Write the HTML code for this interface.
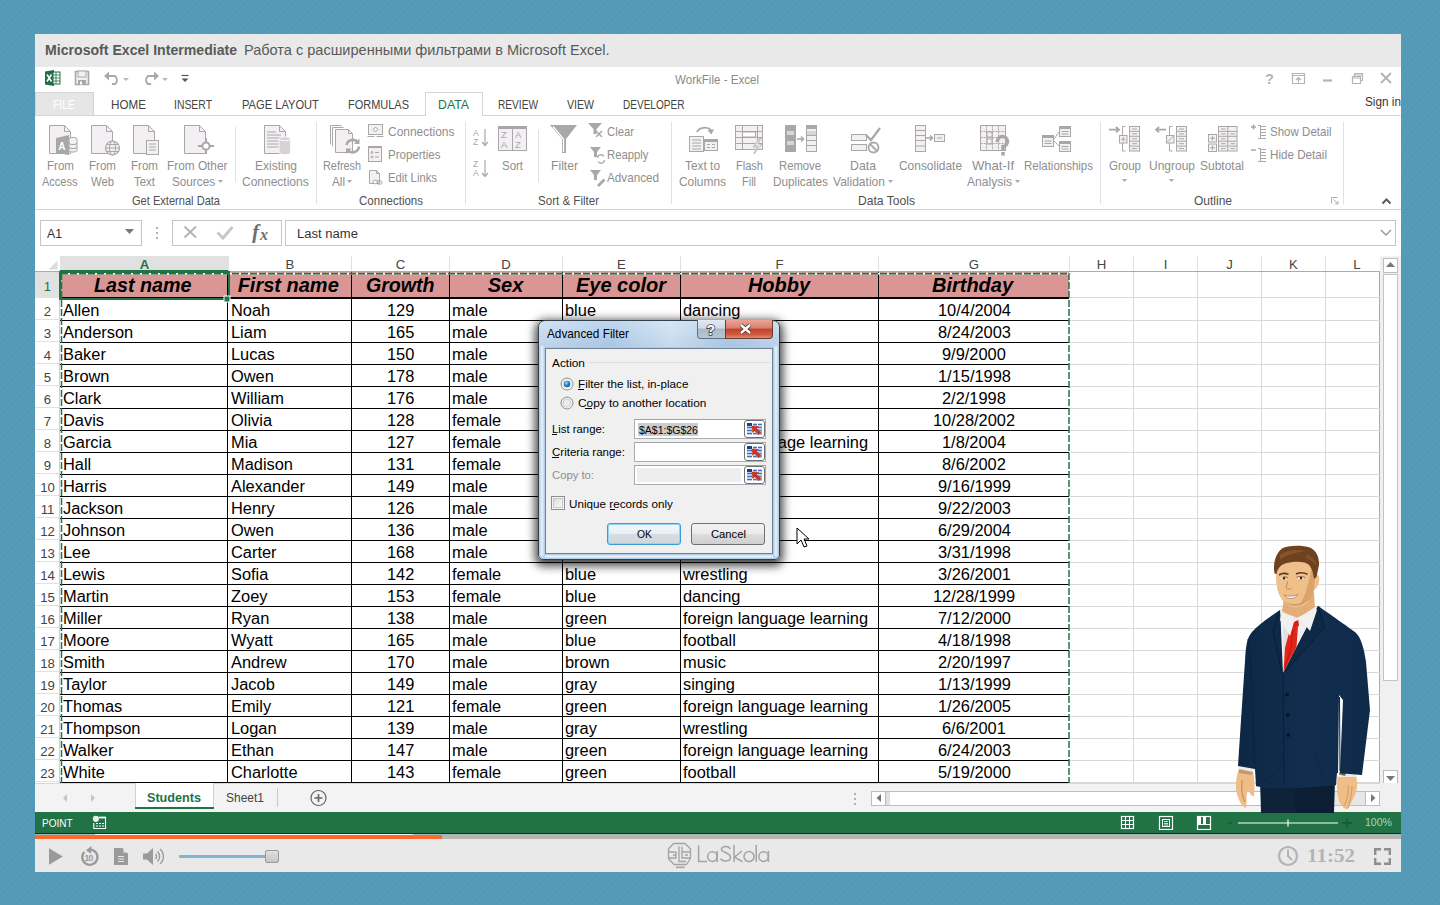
<!DOCTYPE html><html><head><meta charset="utf-8"><style>
*{box-sizing:border-box;margin:0;padding:0}
html,body{width:1440px;height:905px;overflow:hidden}
body{position:relative;font-family:"Liberation Sans",sans-serif;background:#5499b6}
.a{position:absolute;display:block}
.t{position:absolute;white-space:nowrap;line-height:1}
</style></head><body>
<svg class="a" style="left:0px;top:0px;" width="1440" height="905" viewBox="0 0 1440 905"><defs><pattern id="bp" width="6" height="6" patternUnits="userSpaceOnUse"><rect width="6" height="6" fill="#569bb7"/><circle cx="0.5" cy="1.5" r="1.1" fill="#4b8eaf" opacity=".5"/><circle cx="6.5" cy="1.5" r="1.1" fill="#4b8eaf" opacity=".5"/><circle cx="4.5" cy="3.5" r="1.1" fill="#4b8eaf" opacity=".5"/><circle cx="2.5" cy="5.5" r="1.1" fill="#4b8eaf" opacity=".5"/></pattern></defs><rect width="1440" height="905" fill="url(#bp)"/></svg>
<div class="a" style="left:35px;top:34px;width:1366px;height:838px;background:#fff"></div>
<div class="a" style="left:35px;top:34px;width:1366px;height:33px;background:#e9e9e9"></div>
<div class="t" style="left:45px;top:42.7px;font-size:14.5px;color:#595959;font-weight:bold;font-style:normal;transform:scaleX(0.973);transform-origin:0 0;">Microsoft Excel Intermediate</div>
<div class="t" style="left:243.5px;top:42.5px;font-size:14.8px;color:#595959;font-weight:normal;font-style:normal;transform:scaleX(0.982);transform-origin:0 0;">Работа с расширенными фильтрами в Microsoft Excel.</div>
<div class="t" style="left:675px;top:74.4px;font-size:12.5px;color:#8a8a8a;font-weight:normal;font-style:normal;transform:scaleX(0.926);transform-origin:0 0;">WorkFile - Excel</div>
<div class="t" style="left:1365px;top:96.4px;font-size:12.5px;color:#333;font-weight:normal;font-style:normal;transform:scaleX(0.942);transform-origin:0 0;">Sign in</div>
<div class="a" style="left:35px;top:92px;width:59px;height:24px;background:#e6e6e6;border:1px solid #d2d2d2;border-bottom:none"></div>
<div class="a" style="left:35px;top:115px;width:1366px;height:1px;background:#d4d4d4"></div>
<div class="a" style="left:425px;top:92px;width:58px;height:24px;background:#fff;border:1px solid #d4d4d4;border-bottom:none"></div>
<div class="t" style="left:53px;top:99.3px;font-size:12.6px;color:#fff;font-weight:normal;font-style:normal;transform:scaleX(0.827);transform-origin:0 0;">FILE</div>
<div class="t" style="left:111px;top:99.3px;font-size:12.6px;color:#444;font-weight:normal;font-style:normal;transform:scaleX(0.926);transform-origin:0 0;">HOME</div>
<div class="t" style="left:174px;top:99.3px;font-size:12.6px;color:#444;font-weight:normal;font-style:normal;transform:scaleX(0.827);transform-origin:0 0;">INSERT</div>
<div class="t" style="left:242px;top:99.3px;font-size:12.6px;color:#444;font-weight:normal;font-style:normal;transform:scaleX(0.884);transform-origin:0 0;">PAGE LAYOUT</div>
<div class="t" style="left:348px;top:99.3px;font-size:12.6px;color:#444;font-weight:normal;font-style:normal;transform:scaleX(0.871);transform-origin:0 0;">FORMULAS</div>
<div class="t" style="left:438px;top:99.3px;font-size:12.6px;color:#217346;font-weight:normal;font-style:normal;transform:scaleX(0.977);transform-origin:0 0;">DATA</div>
<div class="t" style="left:498px;top:99.3px;font-size:12.6px;color:#444;font-weight:normal;font-style:normal;transform:scaleX(0.805);transform-origin:0 0;">REVIEW</div>
<div class="t" style="left:567px;top:99.3px;font-size:12.6px;color:#444;font-weight:normal;font-style:normal;transform:scaleX(0.838);transform-origin:0 0;">VIEW</div>
<div class="t" style="left:623px;top:99.3px;font-size:12.6px;color:#444;font-weight:normal;font-style:normal;transform:scaleX(0.798);transform-origin:0 0;">DEVELOPER</div>
<div class="a" style="left:35px;top:209px;width:1366px;height:1px;background:#d4d4d4"></div>
<div class="a" style="left:316px;top:122px;width:1px;height:82px;background:#e1e1e1"></div>
<div class="a" style="left:465px;top:122px;width:1px;height:82px;background:#e1e1e1"></div>
<div class="a" style="left:671px;top:122px;width:1px;height:82px;background:#e1e1e1"></div>
<div class="a" style="left:1100px;top:122px;width:1px;height:82px;background:#e1e1e1"></div>
<div class="a" style="left:1343px;top:122px;width:1px;height:82px;background:#e1e1e1"></div>
<div class="a" style="left:235px;top:127px;width:1px;height:55px;background:#e1e1e1"></div>
<div class="a" style="left:538px;top:130px;width:1px;height:52px;background:#e1e1e1"></div>
<svg class="a" style="left:45px;top:122px;" width="36" height="36" viewBox="0 0 36 36"><path d="M4.5 3.5H19.5L25.5 9.5V31.5H4.5Z" fill="#f3eff3" stroke="#a8a8a8"/><path d="M19.5 3.5V9.5H25.5" fill="none" stroke="#a8a8a8"/><path d="M11 16L24 13V33L11 31Z" fill="#a8a8a8"/><text x="13.2" y="28" font-size="10" font-weight="bold" fill="#fff" font-family="Liberation Sans">A</text><ellipse cx="28" cy="17" rx="4" ry="1.6" fill="#f3eff3" stroke="#a8a8a8"/><path d="M24 17V28.5A4 1.6 0 0 0 32 28.5V17" fill="#f3eff3" stroke="#a8a8a8"/><path d="M24 21A4 1.6 0 0 0 32 21M24 25A4 1.6 0 0 0 32 25" fill="none" stroke="#a8a8a8"/></svg>
<div class="t" style="left:46.5px;top:158.9px;font-size:13px;color:#8e8e8e;font-weight:normal;font-style:normal;transform:scaleX(0.890);transform-origin:0 0;">From</div>
<div class="t" style="left:42.25px;top:174.9px;font-size:13px;color:#8e8e8e;font-weight:normal;font-style:normal;transform:scaleX(0.847);transform-origin:0 0;">Access</div>
<svg class="a" style="left:87px;top:122px;" width="36" height="36" viewBox="0 0 36 36"><path d="M4.5 3.5H19.5L25.5 9.5V31.5H4.5Z" fill="#f3eff3" stroke="#a8a8a8"/><path d="M19.5 3.5V9.5H25.5" fill="none" stroke="#a8a8a8"/><circle cx="25.5" cy="26" r="7" fill="#f3eff3" stroke="#a8a8a8" stroke-width="1.2"/><ellipse cx="25.5" cy="26" rx="3" ry="7" fill="none" stroke="#a8a8a8"/><path d="M18.5 26H32.5M19.5 22.5H31.5M19.5 29.5H31.5" stroke="#a8a8a8"/></svg>
<div class="t" style="left:88.5px;top:158.9px;font-size:13px;color:#8e8e8e;font-weight:normal;font-style:normal;transform:scaleX(0.890);transform-origin:0 0;">From</div>
<div class="t" style="left:90.5px;top:174.9px;font-size:13px;color:#8e8e8e;font-weight:normal;font-style:normal;transform:scaleX(0.868);transform-origin:0 0;">Web</div>
<svg class="a" style="left:129px;top:122px;" width="36" height="36" viewBox="0 0 36 36"><path d="M4.5 3.5H19.5L25.5 9.5V31.5H4.5Z" fill="#f3eff3" stroke="#a8a8a8"/><path d="M19.5 3.5V9.5H25.5" fill="none" stroke="#a8a8a8"/><rect x="17.5" y="18.5" width="12" height="14" fill="#f3eff3" stroke="#a8a8a8"/><path d="M20 22H27M20 25H27M20 28H27" stroke="#a8a8a8"/></svg>
<div class="t" style="left:130.5px;top:158.9px;font-size:13px;color:#8e8e8e;font-weight:normal;font-style:normal;transform:scaleX(0.890);transform-origin:0 0;">From</div>
<div class="t" style="left:133.5px;top:174.9px;font-size:13px;color:#8e8e8e;font-weight:normal;font-style:normal;transform:scaleX(0.881);transform-origin:0 0;">Text</div>
<svg class="a" style="left:180px;top:122px;" width="36" height="36" viewBox="0 0 36 36"><path d="M4.5 3.5H19.5L25.5 9.5V31.5H4.5Z" fill="#f3eff3" stroke="#a8a8a8"/><path d="M19.5 3.5V9.5H25.5" fill="none" stroke="#a8a8a8"/><circle cx="26" cy="24" r="3.6" fill="#fff" stroke="#a8a8a8" stroke-width="2"/><path d="M18 24H22.4M29.6 24H34M26 16V20.4M26 27.6V32" stroke="#a8a8a8" stroke-width="2"/></svg>
<div class="t" style="left:167.25px;top:158.9px;font-size:13px;color:#8e8e8e;font-weight:normal;font-style:normal;transform:scaleX(0.910);transform-origin:0 0;">From Other</div>
<div class="t" style="left:172.0px;top:174.9px;font-size:13px;color:#8e8e8e;font-weight:normal;font-style:normal;transform:scaleX(0.902);transform-origin:0 0;">Sources</div>
<svg class="a" style="left:218.0px;top:179.9px;" width="6" height="4" viewBox="0 0 6 4"><path d="M0 0H5L2.5 3Z" fill="#a8a8a8"/></svg>
<svg class="a" style="left:259px;top:122px;" width="36" height="36" viewBox="0 0 36 36"><path d="M5.5 3.5H20.5L26.5 9.5V31.5H5.5Z" fill="#f3eff3" stroke="#a8a8a8"/><path d="M20.5 3.5V9.5H26.5" fill="none" stroke="#a8a8a8"/><path d="M8 10H17M8 13H22M8 16H22M8 19H22M8 22H22M8 25H22" stroke="#a8a8a8"/><path d="M20 17A5.8 2.2 0 0 1 31.6 17V30.5A5.8 2.2 0 0 1 20 30.5Z" fill="#d6d2d6" stroke="#fff" stroke-width=".8"/><path d="M20.5 17.5A5.5 1.8 0 0 0 31 17.5" fill="none" stroke="#fff" stroke-width=".9"/></svg>
<div class="t" style="left:254.7px;top:158.9px;font-size:13px;color:#8e8e8e;font-weight:normal;font-style:normal;transform:scaleX(0.923);transform-origin:0 0;">Existing</div>
<div class="t" style="left:242.39999999999998px;top:174.9px;font-size:13px;color:#8e8e8e;font-weight:normal;font-style:normal;transform:scaleX(0.922);transform-origin:0 0;">Connections</div>
<div class="t" style="left:132.0px;top:194.0px;font-size:13px;color:#505050;font-weight:normal;font-style:normal;transform:scaleX(0.852);transform-origin:0 0;">Get External Data</div>
<svg class="a" style="left:327px;top:122px;" width="36" height="36" viewBox="0 0 36 36"><path d="M3.5 3.5H14.5M3.5 3.5V22.5" fill="none" stroke="#a8a8a8"/><path d="M5.5 5.5H16.5M5.5 5.5V24.5" fill="none" stroke="#a8a8a8"/><path d="M8.5 7.5H21.5L25.5 11.5V30.5H8.5Z" fill="#f3eff3" stroke="#a8a8a8"/><path d="M21.5 7.5V11.5H25.5" fill="none" stroke="#a8a8a8"/><path d="M19.5 23A6.5 6.5 0 0 1 31 20.5M32 24.5A6.5 6.5 0 0 1 20.5 28" fill="none" stroke="#a8a8a8" stroke-width="2.6"/><path d="M32.5 16.5V22H27Z M19 32V26.5H24.5Z" fill="#a8a8a8"/></svg>
<div class="t" style="left:323.0px;top:158.9px;font-size:13px;color:#8e8e8e;font-weight:normal;font-style:normal;transform:scaleX(0.835);transform-origin:0 0;">Refresh</div>
<div class="t" style="left:331.5px;top:174.9px;font-size:13px;color:#8e8e8e;font-weight:normal;font-style:normal;transform:scaleX(0.900);transform-origin:0 0;">All</div>
<svg class="a" style="left:347px;top:179.9px;" width="6" height="4" viewBox="0 0 6 4"><path d="M0 0H5L2.5 3Z" fill="#a8a8a8"/></svg>
<svg class="a" style="left:366px;top:122px;" width="20" height="18" viewBox="0 0 20 18"><rect x="2.5" y="2.5" width="14" height="10" fill="#f3eff3" stroke="#a8a8a8"/><path d="M1.5 14.5H8.5M10.5 14.5H17.5" stroke="#a8a8a8"/><path d="M9.5 5L12 7.5L9.5 10L7 7.5Z" fill="none" stroke="#a8a8a8"/></svg>
<div class="t" style="left:387.5px;top:125.0px;font-size:13px;color:#8e8e8e;font-weight:normal;font-style:normal;transform:scaleX(0.920);transform-origin:0 0;">Connections</div>
<svg class="a" style="left:366px;top:145px;" width="20" height="18" viewBox="0 0 20 18"><rect x="2.5" y="1.5" width="13" height="15" fill="#f3eff3" stroke="#a8a8a8"/><rect x="2" y="1" width="14" height="2" fill="#a8a8a8"/><circle cx="6" cy="7.5" r="1" fill="none" stroke="#a8a8a8"/><circle cx="6" cy="12" r="1" fill="none" stroke="#a8a8a8"/><path d="M9 7.5H13M9 12H13" stroke="#a8a8a8"/></svg>
<div class="t" style="left:387.5px;top:148.0px;font-size:13px;color:#8e8e8e;font-weight:normal;font-style:normal;transform:scaleX(0.886);transform-origin:0 0;">Properties</div>
<svg class="a" style="left:366px;top:168px;" width="20" height="18" viewBox="0 0 20 18"><path d="M3.5 2.5H10.5L13.5 5.5V15.5H3.5Z" fill="#f3eff3" stroke="#a8a8a8"/><path d="M10.5 2.5V5.5H13.5" fill="none" stroke="#a8a8a8"/><ellipse cx="9.5" cy="14" rx="2.6" ry="1.8" fill="#fff" stroke="#a8a8a8"/><ellipse cx="13.5" cy="14.5" rx="2.6" ry="1.8" fill="none" stroke="#a8a8a8"/></svg>
<div class="t" style="left:387.5px;top:171.0px;font-size:13px;color:#8e8e8e;font-weight:normal;font-style:normal;transform:scaleX(0.869);transform-origin:0 0;">Edit Links</div>
<div class="t" style="left:359.0px;top:194.0px;font-size:13px;color:#505050;font-weight:normal;font-style:normal;transform:scaleX(0.886);transform-origin:0 0;">Connections</div>
<svg class="a" style="left:472px;top:126px;" width="18" height="26" viewBox="0 0 18 26"><text x="1" y="9.5" font-size="8.5" fill="#a8a8a8" font-family="Liberation Sans">A</text><text x="1" y="18.5" font-size="8.5" fill="#a8a8a8" font-family="Liberation Sans">Z</text><path d="M13 3V19M10 16L13 19.5L16 16" fill="none" stroke="#a8a8a8" stroke-width="1.2"/></svg>
<svg class="a" style="left:472px;top:157px;" width="18" height="26" viewBox="0 0 18 26"><text x="1" y="9.5" font-size="8.5" fill="#a8a8a8" font-family="Liberation Sans">Z</text><text x="1" y="18.5" font-size="8.5" fill="#a8a8a8" font-family="Liberation Sans">A</text><path d="M13 3V19M10 16L13 19.5L16 16" fill="none" stroke="#a8a8a8" stroke-width="1.2"/></svg>
<svg class="a" style="left:496px;top:124px;" width="34" height="30" viewBox="0 0 34 30"><rect x="2.5" y="2.5" width="28" height="24" fill="#f3eff3" stroke="#a8a8a8"/><rect x="2" y="2" width="29" height="3" fill="#a8a8a8"/><path d="M16.5 5V26.5" stroke="#a8a8a8"/><g font-family="Liberation Sans" font-size="9.5" fill="#a8a8a8"><text x="5" y="14">Z</text><text x="5" y="24">A</text><text x="19" y="14">A</text><text x="19" y="24">Z</text></g></svg>
<div class="t" style="left:501.5px;top:158.9px;font-size:13px;color:#8e8e8e;font-weight:normal;font-style:normal;transform:scaleX(0.881);transform-origin:0 0;">Sort</div>
<svg class="a" style="left:548px;top:123px;" width="32" height="32" viewBox="0 0 32 32"><path d="M2 2H29L18 16V30H14V16Z" fill="#a8a8a8"/><path d="M5 3.5L15.5 16V29" fill="none" stroke="#fff" stroke-width="1.3"/></svg>
<div class="t" style="left:550.5px;top:158.9px;font-size:13px;color:#8e8e8e;font-weight:normal;font-style:normal;transform:scaleX(0.935);transform-origin:0 0;">Filter</div>
<svg class="a" style="left:587px;top:122px;" width="20" height="18" viewBox="0 0 20 18"><path d="M1 1H15L9.5 7V12H6.5V7Z" fill="#a8a8a8"/><path d="M9 9L15 15M15 9L9 15" stroke="#a8a8a8" stroke-width="1.5"/></svg>
<div class="t" style="left:607px;top:125.0px;font-size:13px;color:#8e8e8e;font-weight:normal;font-style:normal;transform:scaleX(0.869);transform-origin:0 0;">Clear</div>
<svg class="a" style="left:589px;top:146px;" width="20" height="18" viewBox="0 0 20 18"><path d="M1 1H12L8 6V11H5V6Z" fill="#a8a8a8"/><path d="M8.5 12A3.5 3.5 0 0 1 15 10.5M15.5 14A3.5 3.5 0 0 1 9 15.5" fill="none" stroke="#a8a8a8" stroke-width="1.3"/></svg>
<div class="t" style="left:607px;top:148.0px;font-size:13px;color:#8e8e8e;font-weight:normal;font-style:normal;transform:scaleX(0.870);transform-origin:0 0;">Reapply</div>
<svg class="a" style="left:589px;top:169px;" width="20" height="18" viewBox="0 0 20 18"><path d="M1 1H12L8 6V11H5V6Z" fill="#a8a8a8"/><path d="M8 16L14.5 9.5L16.5 11.5L10 18Z" fill="#a8a8a8"/></svg>
<div class="t" style="left:607px;top:171.0px;font-size:13px;color:#8e8e8e;font-weight:normal;font-style:normal;transform:scaleX(0.899);transform-origin:0 0;">Advanced</div>
<div class="t" style="left:537.5px;top:194.0px;font-size:13px;color:#505050;font-weight:normal;font-style:normal;transform:scaleX(0.889);transform-origin:0 0;">Sort &amp; Filter</div>
<svg class="a" style="left:686px;top:122px;" width="34" height="34" viewBox="0 0 34 34"><rect x="3.5" y="14.5" width="14" height="15" fill="#f3eff3" stroke="#a8a8a8"/><path d="M6 18H15M6 21H15M6 24H15M6 27H15" stroke="#a8a8a8"/><rect x="18.5" y="17.5" width="13" height="11" fill="#f3eff3" stroke="#a8a8a8"/><rect x="18" y="17" width="14" height="3" fill="#a8a8a8"/><path d="M21 22.5H24M26 22.5H29M21 25.5H24M26 25.5H29" stroke="#a8a8a8"/><path d="M11 10A8 6 0 0 1 25 8" fill="none" stroke="#a8a8a8" stroke-width="1.8"/><path d="M21.5 8.5L25.5 12.5L28 7Z" fill="#a8a8a8"/></svg>
<div class="t" style="left:684.5px;top:158.9px;font-size:13px;color:#8e8e8e;font-weight:normal;font-style:normal;transform:scaleX(0.914);transform-origin:0 0;">Text to</div>
<div class="t" style="left:678.5px;top:174.9px;font-size:13px;color:#8e8e8e;font-weight:normal;font-style:normal;transform:scaleX(0.916);transform-origin:0 0;">Columns</div>
<svg class="a" style="left:734px;top:122px;" width="32" height="36" viewBox="0 0 32 36"><rect x="1.5" y="3.5" width="27" height="24" fill="#f3eff3" stroke="#a8a8a8"/><path d="M1.5 9.5H28.5M1.5 15.5H28.5M1.5 21.5H28.5M8.5 3.5V27.5M23.5 3.5V27.5" stroke="#a8a8a8"/><rect x="8.5" y="10" width="13" height="5" fill="#fff" stroke="#a8a8a8"/><path d="M26 16L19 25H23L20 32L28 22H24L27 16Z" fill="#f3eff3" stroke="#a8a8a8" stroke-width=".8"/><path d="M25 17L20 24H23.5L21 30" fill="none" stroke="#c8c8c8" stroke-width="1.4"/></svg>
<div class="t" style="left:735.5px;top:158.9px;font-size:13px;color:#8e8e8e;font-weight:normal;font-style:normal;transform:scaleX(0.849);transform-origin:0 0;">Flash</div>
<div class="t" style="left:742.0px;top:174.9px;font-size:13px;color:#8e8e8e;font-weight:normal;font-style:normal;transform:scaleX(0.843);transform-origin:0 0;">Fill</div>
<svg class="a" style="left:783px;top:122px;" width="34" height="34" viewBox="0 0 34 34"><rect x="2" y="3" width="11" height="27" fill="#a8a8a8"/><rect x="4" y="9" width="7" height="4" fill="#d9d6d9"/><rect x="4" y="19" width="7" height="4" fill="#d9d6d9"/><rect x="23.5" y="3.5" width="10" height="26" fill="#f3eff3" stroke="#a8a8a8"/><rect x="23" y="3" width="11" height="4" fill="#a8a8a8"/><rect x="24" y="9" width="9" height="4" fill="#d9d6d9"/><path d="M24 13.5H33M24 18.5H33M24 23.5H33" stroke="#a8a8a8"/><path d="M14 17H20M18 14.5L20.5 17L18 19.5" fill="none" stroke="#a8a8a8" stroke-width="1.5"/></svg>
<div class="t" style="left:779.0px;top:158.9px;font-size:13px;color:#8e8e8e;font-weight:normal;font-style:normal;transform:scaleX(0.868);transform-origin:0 0;">Remove</div>
<div class="t" style="left:772.5px;top:174.9px;font-size:13px;color:#8e8e8e;font-weight:normal;font-style:normal;transform:scaleX(0.906);transform-origin:0 0;">Duplicates</div>
<svg class="a" style="left:848px;top:122px;" width="34" height="34" viewBox="0 0 34 34"><rect x="3.5" y="12.5" width="15" height="6" fill="#f3eff3" stroke="#a8a8a8"/><rect x="3.5" y="22.5" width="15" height="6" fill="#f3eff3" stroke="#a8a8a8"/><path d="M18 13L23 18L32 6" fill="none" stroke="#a8a8a8" stroke-width="2.2"/><circle cx="25.5" cy="25.5" r="5" fill="#fff" stroke="#a8a8a8" stroke-width="1.8"/><path d="M22 22L29 29" stroke="#a8a8a8" stroke-width="1.8"/></svg>
<div class="t" style="left:850.0px;top:158.9px;font-size:13px;color:#8e8e8e;font-weight:normal;font-style:normal;transform:scaleX(0.947);transform-origin:0 0;">Data</div>
<div class="t" style="left:833.0px;top:174.9px;font-size:13px;color:#8e8e8e;font-weight:normal;font-style:normal;transform:scaleX(0.926);transform-origin:0 0;">Validation</div>
<svg class="a" style="left:888.0px;top:179.9px;" width="6" height="4" viewBox="0 0 6 4"><path d="M0 0H5L2.5 3Z" fill="#a8a8a8"/></svg>
<svg class="a" style="left:912px;top:122px;" width="36" height="34" viewBox="0 0 36 34"><rect x="3.5" y="3.5" width="10" height="26" fill="#f3eff3" stroke="#a8a8a8"/><path d="M3.5 8.5H13.5M3.5 13.5H13.5M3.5 18.5H13.5M3.5 24H13.5" stroke="#a8a8a8"/><path d="M14 16H20M18 13.5L20.5 16L18 18.5" fill="none" stroke="#a8a8a8" stroke-width="1.6"/><rect x="22.5" y="12.5" width="10" height="7" fill="#f3eff3" stroke="#a8a8a8"/><path d="M25 16H30" stroke="#a8a8a8"/></svg>
<div class="t" style="left:898.5px;top:158.9px;font-size:13px;color:#8e8e8e;font-weight:normal;font-style:normal;transform:scaleX(0.918);transform-origin:0 0;">Consolidate</div>
<svg class="a" style="left:978px;top:122px;" width="34" height="36" viewBox="0 0 34 36"><rect x="2.5" y="3.5" width="25" height="25" fill="#f3eff3" stroke="#a8a8a8"/><path d="M2.5 9.5H27.5M2.5 15.5H27.5M2.5 21.5H27.5M8.5 3.5V28.5M14.5 3.5V28.5M20.5 3.5V28.5" stroke="#a8a8a8" stroke-dasharray="2 1"/><rect x="9" y="10" width="5" height="5" fill="none" stroke="#a8a8a8"/><rect x="9" y="17" width="5" height="5" fill="none" stroke="#a8a8a8"/><path d="M19.5 20A5 5 0 1 1 25 24.5V28" fill="none" stroke="#a8a8a8" stroke-width="3.5" stroke-linecap="butt"/><rect x="23.3" y="30" width="3.5" height="3.5" fill="#a8a8a8"/></svg>
<div class="t" style="left:972.0px;top:158.9px;font-size:13px;color:#8e8e8e;font-weight:normal;font-style:normal;transform:scaleX(1.003);transform-origin:0 0;">What-If</div>
<div class="t" style="left:966.5px;top:174.9px;font-size:13px;color:#8e8e8e;font-weight:normal;font-style:normal;transform:scaleX(0.930);transform-origin:0 0;">Analysis</div>
<svg class="a" style="left:1014.5px;top:179.9px;" width="6" height="4" viewBox="0 0 6 4"><path d="M0 0H5L2.5 3Z" fill="#a8a8a8"/></svg>
<svg class="a" style="left:1040px;top:122px;" width="36" height="34" viewBox="0 0 36 34"><rect x="2.5" y="13.5" width="11" height="11" fill="#f3eff3" stroke="#a8a8a8"/><rect x="2" y="13" width="12" height="3" fill="#a8a8a8"/><path d="M4.5 19H11.5M4.5 21.5H11.5" stroke="#a8a8a8"/><rect x="19.5" y="4.5" width="11" height="10" fill="#f3eff3" stroke="#a8a8a8"/><rect x="19" y="4" width="12" height="3" fill="#a8a8a8"/><path d="M21.5 9.5H28.5M21.5 12H28.5" stroke="#a8a8a8"/><rect x="19.5" y="19.5" width="11" height="10" fill="#f3eff3" stroke="#a8a8a8"/><rect x="19" y="19" width="12" height="3" fill="#a8a8a8"/><path d="M21.5 24.5H28.5M21.5 27H28.5" stroke="#a8a8a8"/><path d="M14 17L19 10M14 19L19 24" stroke="#a8a8a8"/></svg>
<div class="t" style="left:1023.5px;top:158.9px;font-size:13px;color:#8e8e8e;font-weight:normal;font-style:normal;transform:scaleX(0.884);transform-origin:0 0;">Relationships</div>
<div class="t" style="left:857.5px;top:194.0px;font-size:13px;color:#505050;font-weight:normal;font-style:normal;transform:scaleX(0.932);transform-origin:0 0;">Data Tools</div>
<svg class="a" style="left:1108px;top:122px;" width="34" height="34" viewBox="0 0 34 34"><path d="M1 7.7H10.5M8 5L11 7.7L8 10.4" fill="none" stroke="#a8a8a8" stroke-width="1.8"/><path d="M17.5 4.5H14.5V29H17.5" fill="none" stroke="#a8a8a8"/><rect x="21.5" y="4.5" width="10" height="24.5" fill="#f3eff3" stroke="#a8a8a8"/><path d="M21 9.4H32M21 14.3H32M21 19.2H32M21 24.1H32M24 7H29M24 11.9H29M24 16.8H29M24 21.7H29M24 26.6H29" stroke="#a8a8a8"/><rect x="11.5" y="13.5" width="7.5" height="7.5" fill="#f3eff3" stroke="#a8a8a8"/><path d="M13 17.25H17.5M15.25 15V19.5" stroke="#a8a8a8"/></svg>
<div class="t" style="left:1109.0px;top:158.9px;font-size:13px;color:#8e8e8e;font-weight:normal;font-style:normal;transform:scaleX(0.886);transform-origin:0 0;">Group</div>
<svg class="a" style="left:1122px;top:178.9px;" width="6" height="4" viewBox="0 0 6 4"><path d="M0 0H5L2.5 3Z" fill="#a8a8a8"/></svg>
<svg class="a" style="left:1155px;top:122px;" width="34" height="34" viewBox="0 0 34 34"><path d="M11 7.7H1.5M4 5L1 7.7L4 10.4" fill="none" stroke="#a8a8a8" stroke-width="1.8"/><path d="M17.5 4.5H14.5V29H17.5" fill="none" stroke="#a8a8a8"/><rect x="21.5" y="4.5" width="10" height="24.5" fill="#f3eff3" stroke="#a8a8a8"/><path d="M21 9.4H32M21 14.3H32M21 19.2H32M21 24.1H32M24 7H29M24 11.9H29M24 16.8H29M24 21.7H29M24 26.6H29" stroke="#a8a8a8"/><rect x="11.5" y="13.5" width="7.5" height="7.5" fill="#f3eff3" stroke="#a8a8a8"/><path d="M12 20.5L18.5 14" stroke="#a8a8a8"/></svg>
<div class="t" style="left:1149.0px;top:158.9px;font-size:13px;color:#8e8e8e;font-weight:normal;font-style:normal;transform:scaleX(0.922);transform-origin:0 0;">Ungroup</div>
<svg class="a" style="left:1169px;top:178.9px;" width="6" height="4" viewBox="0 0 6 4"><path d="M0 0H5L2.5 3Z" fill="#a8a8a8"/></svg>
<svg class="a" style="left:1205px;top:122px;" width="34" height="34" viewBox="0 0 34 34"><path d="M13.5 8V4.5H16" fill="none" stroke="#a8a8a8"/><rect x="13.5" y="4.5" width="18.5" height="24.5" fill="#f3eff3" stroke="#a8a8a8"/><path d="M13.5 9.4H32M13.5 14.3H32M13.5 19.2H32M13.5 24.1H32M22.75 4.5V29M16 7H20.5M16 11.9H20.5M16 16.8H20.5M16 21.7H20.5M16 26.6H20.5M25.5 11.9H30M25.5 21.7H30M25.5 26.6H30" stroke="#a8a8a8"/><rect x="3.5" y="12.5" width="8" height="7.5" fill="#f3eff3" stroke="#a8a8a8"/><path d="M5 16.25H10M7.5 14V18.5" stroke="#a8a8a8"/><rect x="3.5" y="22" width="8" height="7.5" fill="#f3eff3" stroke="#a8a8a8"/><path d="M5 25.75H10M7.5 23.5V28" stroke="#a8a8a8"/></svg>
<div class="t" style="left:1200.0px;top:158.9px;font-size:13px;color:#8e8e8e;font-weight:normal;font-style:normal;transform:scaleX(0.922);transform-origin:0 0;">Subtotal</div>
<svg class="a" style="left:1250px;top:123px;" width="20" height="18" viewBox="0 0 20 18"><path d="M1 4H6M3.5 1.5V6.5" stroke="#a8a8a8" stroke-width="1.5"/><path d="M8 2.5H10.5V15.5H8" fill="none" stroke="#a8a8a8"/><path d="M11 3.5H16M11 6.5H16M11 9.5H16M11 12.5H16M11 15.5H16" stroke="#a8a8a8"/></svg>
<div class="t" style="left:1270px;top:125.0px;font-size:13px;color:#8e8e8e;font-weight:normal;font-style:normal;transform:scaleX(0.887);transform-origin:0 0;">Show Detail</div>
<svg class="a" style="left:1250px;top:146px;" width="20" height="18" viewBox="0 0 20 18"><path d="M1 4H6" stroke="#a8a8a8" stroke-width="1.5"/><path d="M8 2.5H10.5V15.5H8" fill="none" stroke="#a8a8a8"/><path d="M11 3.5H16M11 6.5H16M11 9.5H16M11 12.5H16M11 15.5H16" stroke="#a8a8a8"/></svg>
<div class="t" style="left:1270px;top:148.0px;font-size:13px;color:#8e8e8e;font-weight:normal;font-style:normal;transform:scaleX(0.896);transform-origin:0 0;">Hide Detail</div>
<div class="t" style="left:1194.0px;top:194.0px;font-size:13px;color:#505050;font-weight:normal;font-style:normal;transform:scaleX(0.923);transform-origin:0 0;">Outline</div>
<svg class="a" style="left:1331px;top:197px;" width="8" height="8" viewBox="0 0 8 8"><path d="M.5 .5H6.5M.5 .5V6.5" fill="none" stroke="#b0b0b0"/><path d="M2.5 2.5L7 7M7 4V7H4" fill="none" stroke="#b0b0b0"/></svg>
<svg class="a" style="left:1381px;top:197px;" width="12" height="8" viewBox="0 0 12 8"><path d="M1.5 6.5L5.5 2.5L9.5 6.5" fill="none" stroke="#5a5a5a" stroke-width="2"/></svg>
<svg class="a" style="left:44px;top:69px;" width="18" height="18" viewBox="0 0 18 18"><path d="M1 2.5L10 1V17L1 15.5Z" fill="#1e7145"/><rect x="9" y="3" width="7" height="12" fill="#fff" stroke="#1e7145"/><path d="M9 6H16M9 9H16M9 12H16M12 3V15" stroke="#1e7145" stroke-width=".8"/><path d="M3 5.5L7.5 12.5M7.5 5.5L3 12.5" stroke="#fff" stroke-width="1.6"/></svg>
<svg class="a" style="left:74px;top:70px;" width="18" height="16" viewBox="0 0 18 16"><path d="M1.5 1.5H14.5V14.5H1.5Z" fill="#f3eff3" stroke="#a8a8a8" stroke-width="1.6"/><rect x="4" y="1" width="8" height="6" fill="#f3eff3" stroke="#a8a8a8"/><rect x="4" y="10" width="8" height="5" fill="#a8a8a8"/><rect x="6" y="11.5" width="2" height="3" fill="#fff"/></svg>
<svg class="a" style="left:103px;top:69px;transform:translateY(1px)" width="30" height="16" viewBox="0 0 30 16"><path d="M5 6H12A5 5 0 0 1 12 14H9" fill="none" stroke="#a8a8a8" stroke-width="1.8"/><path d="M1 6L6 1.5V10.5Z" fill="#a8a8a8"/><path d="M20 8H26L23 11Z" fill="#b8b8b8"/></svg>
<svg class="a" style="left:142px;top:69px;transform:translateY(1px)" width="30" height="16" viewBox="0 0 30 16"><path d="M13 6H6A5 5 0 0 0 6 14H9" fill="none" stroke="#a8a8a8" stroke-width="1.8"/><path d="M17 6L12 1.5V10.5Z" fill="#a8a8a8"/><path d="M20 8H26L23 11Z" fill="#b8b8b8"/></svg>
<svg class="a" style="left:180px;top:72px;" width="10" height="12" viewBox="0 0 10 12"><path d="M1.5 3.5H8.5" stroke="#555" stroke-width="1.2"/><path d="M1.5 6.5H8.5L5 10Z" fill="#555"/></svg>
<svg class="a" style="left:1260px;top:70px;" width="140" height="18" viewBox="0 0 140 18"><g fill="none" stroke="#b4b4b4" stroke-width="1.2"><path d="M32.5 3.5H44.5V13.5H32.5ZM32.5 5.5H44.5M38.5 12.5V7.5M36 10L38.5 7.5L41 10"/><path d="M63 10.5H72" stroke-width="2.2"/><path d="M92.5 6.5H100.5V13.5H92.5ZM94.5 6.5V3.5H102.5V10.5H100.5M92.5 8H100.5M94.5 5H102.5"/><path d="M121 3L131 13M131 3L121 13" stroke-width="2"/></g><text x="5" y="14" font-size="14.5" font-weight="bold" fill="#b4b4b4" font-family="Liberation Sans">?</text></svg>
<div class="a" style="left:40px;top:220px;width:102px;height:26px;background:#fff;border:1px solid #c6c6c6"></div>
<div class="t" style="left:47px;top:228.4px;font-size:12.3px;color:#333;font-weight:normal;font-style:normal;transform:scaleX(0.997);transform-origin:0 0;">A1</div>
<svg class="a" style="left:125px;top:229px;" width="10" height="6" viewBox="0 0 10 6"><path d="M0 0H9L4.5 5Z" fill="#777"/></svg>
<svg class="a" style="left:155px;top:224px;" width="4" height="18" viewBox="0 0 4 18"><circle cx="2" cy="4" r="1" fill="#999"/><circle cx="2" cy="9" r="1" fill="#999"/><circle cx="2" cy="14" r="1" fill="#999"/></svg>
<div class="a" style="left:172px;top:220px;width:110px;height:26px;background:#fff;border:1px solid #c6c6c6"></div>
<svg class="a" style="left:176px;top:223px;" width="104" height="20" viewBox="0 0 104 20"><path d="M8.5 3.5L20 14.5M20 3.5L8.5 14.5" stroke="#b3b3b3" stroke-width="1.8"/><path d="M41.5 9.5L47 15L56.5 4" fill="none" stroke="#c8c8c8" stroke-width="3"/><text x="76" y="16" font-family="Liberation Serif" font-style="italic" font-weight="bold" font-size="21" fill="#6f6f6f">f</text><text x="84" y="17" font-family="Liberation Serif" font-style="italic" font-weight="bold" font-size="16" fill="#6f6f6f">x</text></svg>
<div class="a" style="left:285px;top:220px;width:1111px;height:26px;background:#fff;border:1px solid #c6c6c6"></div>
<div class="t" style="left:297px;top:228.2px;font-size:12.5px;color:#333;font-weight:normal;font-style:normal;transform:scaleX(1.045);transform-origin:0 0;">Last name</div>
<svg class="a" style="left:1380px;top:229px;" width="12" height="8" viewBox="0 0 12 8"><path d="M1 1L6 6L11 1" fill="none" stroke="#999" stroke-width="1.4"/></svg>
<div class="a" style="left:35px;top:256px;width:25px;height:16px;background:#fff"></div>
<svg class="a" style="left:46.5px;top:259px;" width="12" height="12" viewBox="0 0 12 12"><path d="M10.5 1.5V10.5H1.5Z" fill="#dcdcdc"/></svg>
<div class="a" style="left:60px;top:256px;width:168px;height:16px;background:#e1e1e1"></div>
<div class="a" style="left:228px;top:256px;width:1px;height:16px;background:#e1e1e1"></div>
<div class="t" style="left:139.73366562500001px;top:257.8px;font-size:13.2px;color:#217346;font-weight:bold;font-style:normal;transform:scaleX(1.000);transform-origin:0 0;">A</div>
<div class="a" style="left:351px;top:256px;width:1px;height:16px;background:#e1e1e1"></div>
<div class="t" style="left:285.5978px;top:257.8px;font-size:13.2px;color:#444;font-weight:normal;font-style:normal;transform:scaleX(1.000);transform-origin:0 0;">B</div>
<div class="a" style="left:449px;top:256px;width:1px;height:16px;background:#e1e1e1"></div>
<div class="t" style="left:395.733665625px;top:257.8px;font-size:13.2px;color:#444;font-weight:normal;font-style:normal;transform:scaleX(1.000);transform-origin:0 0;">C</div>
<div class="a" style="left:562px;top:256px;width:1px;height:16px;background:#e1e1e1"></div>
<div class="t" style="left:501.233665625px;top:257.8px;font-size:13.2px;color:#444;font-weight:normal;font-style:normal;transform:scaleX(1.000);transform-origin:0 0;">D</div>
<div class="a" style="left:680px;top:256px;width:1px;height:16px;background:#e1e1e1"></div>
<div class="t" style="left:617.0978px;top:257.8px;font-size:13.2px;color:#444;font-weight:normal;font-style:normal;transform:scaleX(1.000);transform-origin:0 0;">E</div>
<div class="a" style="left:878px;top:256px;width:1px;height:16px;background:#e1e1e1"></div>
<div class="t" style="left:775.46843125px;top:257.8px;font-size:13.2px;color:#444;font-weight:normal;font-style:normal;transform:scaleX(1.000);transform-origin:0 0;">F</div>
<div class="a" style="left:1069px;top:256px;width:1px;height:16px;background:#e1e1e1"></div>
<div class="t" style="left:968.866334375px;top:257.8px;font-size:13.2px;color:#444;font-weight:normal;font-style:normal;transform:scaleX(1.000);transform-origin:0 0;">G</div>
<div class="a" style="left:1133px;top:256px;width:1px;height:16px;background:#e1e1e1"></div>
<div class="t" style="left:1096.733665625px;top:257.8px;font-size:13.2px;color:#444;font-weight:normal;font-style:normal;transform:scaleX(1.000);transform-origin:0 0;">H</div>
<div class="a" style="left:1197px;top:256px;width:1px;height:16px;background:#e1e1e1"></div>
<div class="t" style="left:1163.666334375px;top:257.8px;font-size:13.2px;color:#444;font-weight:normal;font-style:normal;transform:scaleX(1.000);transform-origin:0 0;">I</div>
<div class="a" style="left:1261px;top:256px;width:1px;height:16px;background:#e1e1e1"></div>
<div class="t" style="left:1226.2px;top:257.8px;font-size:13.2px;color:#444;font-weight:normal;font-style:normal;transform:scaleX(1.000);transform-origin:0 0;">J</div>
<div class="a" style="left:1325px;top:256px;width:1px;height:16px;background:#e1e1e1"></div>
<div class="t" style="left:1289.0978px;top:257.8px;font-size:13.2px;color:#444;font-weight:normal;font-style:normal;transform:scaleX(1.000);transform-origin:0 0;">K</div>
<div class="a" style="left:1380px;top:256px;width:1px;height:16px;background:#e1e1e1"></div>
<div class="t" style="left:1353.32936875px;top:257.8px;font-size:13.2px;color:#444;font-weight:normal;font-style:normal;transform:scaleX(1.000);transform-origin:0 0;">L</div>
<div class="a" style="left:35px;top:271px;width:1345px;height:1px;background:#ababab"></div>
<div class="a" style="left:60px;top:270px;width:168px;height:2px;background:#217346"></div>
<div class="a" style="left:1379px;top:272px;width:1px;height:511px;background:#ababab"></div>
<div class="a" style="left:59px;top:272px;width:1px;height:511px;background:#d0d0d0"></div>
<div class="a" style="left:35px;top:272px;width:24px;height:26px;background:#e1e1e1"></div>
<div class="t" style="left:43.82936875px;top:280.3px;font-size:13.2px;color:#217346;font-weight:normal;font-style:normal;transform:scaleX(1.000);transform-origin:0 0;">1</div>
<div class="t" style="left:43.82936875px;top:304.8px;font-size:13.2px;color:#444;font-weight:normal;font-style:normal;transform:scaleX(1.000);transform-origin:0 0;">2</div>
<div class="a" style="left:35px;top:319px;width:24px;height:1px;background:#e1e1e1"></div>
<div class="t" style="left:43.82936875px;top:326.8px;font-size:13.2px;color:#444;font-weight:normal;font-style:normal;transform:scaleX(1.000);transform-origin:0 0;">3</div>
<div class="a" style="left:35px;top:341px;width:24px;height:1px;background:#e1e1e1"></div>
<div class="t" style="left:43.82936875px;top:348.8px;font-size:13.2px;color:#444;font-weight:normal;font-style:normal;transform:scaleX(1.000);transform-origin:0 0;">4</div>
<div class="a" style="left:35px;top:363px;width:24px;height:1px;background:#e1e1e1"></div>
<div class="t" style="left:43.82936875px;top:370.8px;font-size:13.2px;color:#444;font-weight:normal;font-style:normal;transform:scaleX(1.000);transform-origin:0 0;">5</div>
<div class="a" style="left:35px;top:385px;width:24px;height:1px;background:#e1e1e1"></div>
<div class="t" style="left:43.82936875px;top:392.8px;font-size:13.2px;color:#444;font-weight:normal;font-style:normal;transform:scaleX(1.000);transform-origin:0 0;">6</div>
<div class="a" style="left:35px;top:407px;width:24px;height:1px;background:#e1e1e1"></div>
<div class="t" style="left:43.82936875px;top:414.8px;font-size:13.2px;color:#444;font-weight:normal;font-style:normal;transform:scaleX(1.000);transform-origin:0 0;">7</div>
<div class="a" style="left:35px;top:429px;width:24px;height:1px;background:#e1e1e1"></div>
<div class="t" style="left:43.82936875px;top:436.8px;font-size:13.2px;color:#444;font-weight:normal;font-style:normal;transform:scaleX(1.000);transform-origin:0 0;">8</div>
<div class="a" style="left:35px;top:451px;width:24px;height:1px;background:#e1e1e1"></div>
<div class="t" style="left:43.82936875px;top:458.8px;font-size:13.2px;color:#444;font-weight:normal;font-style:normal;transform:scaleX(1.000);transform-origin:0 0;">9</div>
<div class="a" style="left:35px;top:473px;width:24px;height:1px;background:#e1e1e1"></div>
<div class="t" style="left:40.1587375px;top:480.8px;font-size:13.2px;color:#444;font-weight:normal;font-style:normal;transform:scaleX(1.000);transform-origin:0 0;">10</div>
<div class="a" style="left:35px;top:495px;width:24px;height:1px;background:#e1e1e1"></div>
<div class="t" style="left:40.64858125px;top:502.8px;font-size:13.2px;color:#444;font-weight:normal;font-style:normal;transform:scaleX(1.000);transform-origin:0 0;">11</div>
<div class="a" style="left:35px;top:517px;width:24px;height:1px;background:#e1e1e1"></div>
<div class="t" style="left:40.1587375px;top:524.8px;font-size:13.2px;color:#444;font-weight:normal;font-style:normal;transform:scaleX(1.000);transform-origin:0 0;">12</div>
<div class="a" style="left:35px;top:539px;width:24px;height:1px;background:#e1e1e1"></div>
<div class="t" style="left:40.1587375px;top:546.8px;font-size:13.2px;color:#444;font-weight:normal;font-style:normal;transform:scaleX(1.000);transform-origin:0 0;">13</div>
<div class="a" style="left:35px;top:561px;width:24px;height:1px;background:#e1e1e1"></div>
<div class="t" style="left:40.1587375px;top:568.8px;font-size:13.2px;color:#444;font-weight:normal;font-style:normal;transform:scaleX(1.000);transform-origin:0 0;">14</div>
<div class="a" style="left:35px;top:583px;width:24px;height:1px;background:#e1e1e1"></div>
<div class="t" style="left:40.1587375px;top:590.8px;font-size:13.2px;color:#444;font-weight:normal;font-style:normal;transform:scaleX(1.000);transform-origin:0 0;">15</div>
<div class="a" style="left:35px;top:605px;width:24px;height:1px;background:#e1e1e1"></div>
<div class="t" style="left:40.1587375px;top:612.8px;font-size:13.2px;color:#444;font-weight:normal;font-style:normal;transform:scaleX(1.000);transform-origin:0 0;">16</div>
<div class="a" style="left:35px;top:627px;width:24px;height:1px;background:#e1e1e1"></div>
<div class="t" style="left:40.1587375px;top:634.8px;font-size:13.2px;color:#444;font-weight:normal;font-style:normal;transform:scaleX(1.000);transform-origin:0 0;">17</div>
<div class="a" style="left:35px;top:649px;width:24px;height:1px;background:#e1e1e1"></div>
<div class="t" style="left:40.1587375px;top:656.8px;font-size:13.2px;color:#444;font-weight:normal;font-style:normal;transform:scaleX(1.000);transform-origin:0 0;">18</div>
<div class="a" style="left:35px;top:671px;width:24px;height:1px;background:#e1e1e1"></div>
<div class="t" style="left:40.1587375px;top:678.8px;font-size:13.2px;color:#444;font-weight:normal;font-style:normal;transform:scaleX(1.000);transform-origin:0 0;">19</div>
<div class="a" style="left:35px;top:693px;width:24px;height:1px;background:#e1e1e1"></div>
<div class="t" style="left:40.1587375px;top:700.8px;font-size:13.2px;color:#444;font-weight:normal;font-style:normal;transform:scaleX(1.000);transform-origin:0 0;">20</div>
<div class="a" style="left:35px;top:715px;width:24px;height:1px;background:#e1e1e1"></div>
<div class="t" style="left:40.1587375px;top:722.8px;font-size:13.2px;color:#444;font-weight:normal;font-style:normal;transform:scaleX(1.000);transform-origin:0 0;">21</div>
<div class="a" style="left:35px;top:737px;width:24px;height:1px;background:#e1e1e1"></div>
<div class="t" style="left:40.1587375px;top:744.8px;font-size:13.2px;color:#444;font-weight:normal;font-style:normal;transform:scaleX(1.000);transform-origin:0 0;">22</div>
<div class="a" style="left:35px;top:759px;width:24px;height:1px;background:#e1e1e1"></div>
<div class="t" style="left:40.1587375px;top:766.8px;font-size:13.2px;color:#444;font-weight:normal;font-style:normal;transform:scaleX(1.000);transform-origin:0 0;">23</div>
<div class="a" style="left:35px;top:781px;width:24px;height:1px;background:#e1e1e1"></div>
<div class="a" style="left:1133px;top:272px;width:1px;height:511px;background:#d9d9d9"></div>
<div class="a" style="left:1197px;top:272px;width:1px;height:511px;background:#d9d9d9"></div>
<div class="a" style="left:1261px;top:272px;width:1px;height:511px;background:#d9d9d9"></div>
<div class="a" style="left:1325px;top:272px;width:1px;height:511px;background:#d9d9d9"></div>
<div class="a" style="left:1069px;top:297px;width:311px;height:1px;background:#d9d9d9"></div>
<div class="a" style="left:1069px;top:320px;width:311px;height:1px;background:#d9d9d9"></div>
<div class="a" style="left:1069px;top:342px;width:311px;height:1px;background:#d9d9d9"></div>
<div class="a" style="left:1069px;top:364px;width:311px;height:1px;background:#d9d9d9"></div>
<div class="a" style="left:1069px;top:386px;width:311px;height:1px;background:#d9d9d9"></div>
<div class="a" style="left:1069px;top:408px;width:311px;height:1px;background:#d9d9d9"></div>
<div class="a" style="left:1069px;top:430px;width:311px;height:1px;background:#d9d9d9"></div>
<div class="a" style="left:1069px;top:452px;width:311px;height:1px;background:#d9d9d9"></div>
<div class="a" style="left:1069px;top:474px;width:311px;height:1px;background:#d9d9d9"></div>
<div class="a" style="left:1069px;top:496px;width:311px;height:1px;background:#d9d9d9"></div>
<div class="a" style="left:1069px;top:518px;width:311px;height:1px;background:#d9d9d9"></div>
<div class="a" style="left:1069px;top:540px;width:311px;height:1px;background:#d9d9d9"></div>
<div class="a" style="left:1069px;top:562px;width:311px;height:1px;background:#d9d9d9"></div>
<div class="a" style="left:1069px;top:584px;width:311px;height:1px;background:#d9d9d9"></div>
<div class="a" style="left:1069px;top:606px;width:311px;height:1px;background:#d9d9d9"></div>
<div class="a" style="left:1069px;top:628px;width:311px;height:1px;background:#d9d9d9"></div>
<div class="a" style="left:1069px;top:650px;width:311px;height:1px;background:#d9d9d9"></div>
<div class="a" style="left:1069px;top:672px;width:311px;height:1px;background:#d9d9d9"></div>
<div class="a" style="left:1069px;top:694px;width:311px;height:1px;background:#d9d9d9"></div>
<div class="a" style="left:1069px;top:716px;width:311px;height:1px;background:#d9d9d9"></div>
<div class="a" style="left:1069px;top:738px;width:311px;height:1px;background:#d9d9d9"></div>
<div class="a" style="left:1069px;top:760px;width:311px;height:1px;background:#d9d9d9"></div>
<div class="a" style="left:1069px;top:782px;width:311px;height:1px;background:#d9d9d9"></div>
<div class="a" style="left:60px;top:272px;width:1009px;height:26px;background:#da9694"></div>
<div class="t" style="left:94.07882187500002px;top:275.1px;font-size:20px;color:#000;font-weight:bold;font-style:italic;transform:scaleX(0.985);transform-origin:0 0;">Last name</div>
<div class="t" style="left:237.62859375px;top:275.1px;font-size:20px;color:#000;font-weight:bold;font-style:italic;transform:scaleX(1.000);transform-origin:0 0;">First name</div>
<div class="t" style="left:366.004746875px;top:275.1px;font-size:20px;color:#000;font-weight:bold;font-style:italic;transform:scaleX(0.980);transform-origin:0 0;">Growth</div>
<div class="t" style="left:487.706875px;top:275.1px;font-size:20px;color:#000;font-weight:bold;font-style:italic;transform:scaleX(1.000);transform-origin:0 0;">Sex</div>
<div class="t" style="left:575.9803125px;top:275.1px;font-size:20px;color:#000;font-weight:bold;font-style:italic;transform:scaleX(1.000);transform-origin:0 0;">Eye color</div>
<div class="t" style="left:747.89140625px;top:275.1px;font-size:20px;color:#000;font-weight:bold;font-style:italic;transform:scaleX(1.000);transform-origin:0 0;">Hobby</div>
<div class="t" style="left:931.93828125px;top:275.1px;font-size:20px;color:#000;font-weight:bold;font-style:italic;transform:scaleX(1.000);transform-origin:0 0;">Birthday</div>
<div class="a" style="left:227px;top:272px;width:1px;height:511px;background:#000"></div>
<div class="a" style="left:351px;top:272px;width:1px;height:511px;background:#000"></div>
<div class="a" style="left:449px;top:272px;width:1px;height:511px;background:#000"></div>
<div class="a" style="left:562px;top:272px;width:1px;height:511px;background:#000"></div>
<div class="a" style="left:680px;top:272px;width:1px;height:511px;background:#000"></div>
<div class="a" style="left:878px;top:272px;width:1px;height:511px;background:#000"></div>
<div class="a" style="left:60px;top:297px;width:1009px;height:2px;background:#000"></div>
<div class="a" style="left:60px;top:320px;width:1009px;height:1px;background:#000"></div>
<div class="a" style="left:60px;top:342px;width:1009px;height:1px;background:#000"></div>
<div class="a" style="left:60px;top:364px;width:1009px;height:1px;background:#000"></div>
<div class="a" style="left:60px;top:386px;width:1009px;height:1px;background:#000"></div>
<div class="a" style="left:60px;top:408px;width:1009px;height:1px;background:#000"></div>
<div class="a" style="left:60px;top:430px;width:1009px;height:1px;background:#000"></div>
<div class="a" style="left:60px;top:452px;width:1009px;height:1px;background:#000"></div>
<div class="a" style="left:60px;top:474px;width:1009px;height:1px;background:#000"></div>
<div class="a" style="left:60px;top:496px;width:1009px;height:1px;background:#000"></div>
<div class="a" style="left:60px;top:518px;width:1009px;height:1px;background:#000"></div>
<div class="a" style="left:60px;top:540px;width:1009px;height:1px;background:#000"></div>
<div class="a" style="left:60px;top:562px;width:1009px;height:1px;background:#000"></div>
<div class="a" style="left:60px;top:584px;width:1009px;height:1px;background:#000"></div>
<div class="a" style="left:60px;top:606px;width:1009px;height:1px;background:#000"></div>
<div class="a" style="left:60px;top:628px;width:1009px;height:1px;background:#000"></div>
<div class="a" style="left:60px;top:650px;width:1009px;height:1px;background:#000"></div>
<div class="a" style="left:60px;top:672px;width:1009px;height:1px;background:#000"></div>
<div class="a" style="left:60px;top:694px;width:1009px;height:1px;background:#000"></div>
<div class="a" style="left:60px;top:716px;width:1009px;height:1px;background:#000"></div>
<div class="a" style="left:60px;top:738px;width:1009px;height:1px;background:#000"></div>
<div class="a" style="left:60px;top:760px;width:1009px;height:1px;background:#000"></div>
<div class="a" style="left:60px;top:782px;width:1009px;height:1px;background:#000"></div>
<div class="t" style="left:62.5px;top:302.5px;font-size:16px;color:#000;font-weight:normal;font-style:normal;transform:scaleX(1.025);transform-origin:0 0;">Allen</div>
<div class="t" style="left:230.5px;top:302.5px;font-size:16px;color:#000;font-weight:normal;font-style:normal;transform:scaleX(1.025);transform-origin:0 0;">Noah</div>
<div class="t" style="left:386.81855625000003px;top:302.5px;font-size:16px;color:#000;font-weight:normal;font-style:normal;transform:scaleX(1.025);transform-origin:0 0;">129</div>
<div class="t" style="left:452.2px;top:302.5px;font-size:16px;color:#000;font-weight:normal;font-style:normal;transform:scaleX(1.025);transform-origin:0 0;">male</div>
<div class="t" style="left:565.3px;top:302.5px;font-size:16px;color:#000;font-weight:normal;font-style:normal;transform:scaleX(1.025);transform-origin:0 0;">blue</div>
<div class="t" style="left:683.3px;top:302.5px;font-size:16px;color:#000;font-weight:normal;font-style:normal;transform:scaleX(1.025);transform-origin:0 0;">dancing</div>
<div class="t" style="left:937.82025px;top:302.5px;font-size:16px;color:#000;font-weight:normal;font-style:normal;transform:scaleX(1.025);transform-origin:0 0;">10/4/2004</div>
<div class="t" style="left:62.5px;top:324.5px;font-size:16px;color:#000;font-weight:normal;font-style:normal;transform:scaleX(1.025);transform-origin:0 0;">Anderson</div>
<div class="t" style="left:230.5px;top:324.5px;font-size:16px;color:#000;font-weight:normal;font-style:normal;transform:scaleX(1.025);transform-origin:0 0;">Liam</div>
<div class="t" style="left:386.81855625000003px;top:324.5px;font-size:16px;color:#000;font-weight:normal;font-style:normal;transform:scaleX(1.025);transform-origin:0 0;">165</div>
<div class="t" style="left:452.2px;top:324.5px;font-size:16px;color:#000;font-weight:normal;font-style:normal;transform:scaleX(1.025);transform-origin:0 0;">male</div>
<div class="t" style="left:565.3px;top:324.5px;font-size:16px;color:#000;font-weight:normal;font-style:normal;transform:scaleX(1.025);transform-origin:0 0;">brown</div>
<div class="t" style="left:683.3px;top:324.5px;font-size:16px;color:#000;font-weight:normal;font-style:normal;transform:scaleX(1.025);transform-origin:0 0;">music</div>
<div class="t" style="left:937.82025px;top:324.5px;font-size:16px;color:#000;font-weight:normal;font-style:normal;transform:scaleX(1.025);transform-origin:0 0;">8/24/2003</div>
<div class="t" style="left:62.5px;top:346.5px;font-size:16px;color:#000;font-weight:normal;font-style:normal;transform:scaleX(1.025);transform-origin:0 0;">Baker</div>
<div class="t" style="left:230.5px;top:346.5px;font-size:16px;color:#000;font-weight:normal;font-style:normal;transform:scaleX(1.025);transform-origin:0 0;">Lucas</div>
<div class="t" style="left:386.81855625000003px;top:346.5px;font-size:16px;color:#000;font-weight:normal;font-style:normal;transform:scaleX(1.025);transform-origin:0 0;">150</div>
<div class="t" style="left:452.2px;top:346.5px;font-size:16px;color:#000;font-weight:normal;font-style:normal;transform:scaleX(1.025);transform-origin:0 0;">male</div>
<div class="t" style="left:565.3px;top:346.5px;font-size:16px;color:#000;font-weight:normal;font-style:normal;transform:scaleX(1.025);transform-origin:0 0;">gray</div>
<div class="t" style="left:683.3px;top:346.5px;font-size:16px;color:#000;font-weight:normal;font-style:normal;transform:scaleX(1.025);transform-origin:0 0;">music</div>
<div class="t" style="left:942.3807312499999px;top:346.5px;font-size:16px;color:#000;font-weight:normal;font-style:normal;transform:scaleX(1.025);transform-origin:0 0;">9/9/2000</div>
<div class="t" style="left:62.5px;top:368.5px;font-size:16px;color:#000;font-weight:normal;font-style:normal;transform:scaleX(1.025);transform-origin:0 0;">Brown</div>
<div class="t" style="left:230.5px;top:368.5px;font-size:16px;color:#000;font-weight:normal;font-style:normal;transform:scaleX(1.025);transform-origin:0 0;">Owen</div>
<div class="t" style="left:386.81855625000003px;top:368.5px;font-size:16px;color:#000;font-weight:normal;font-style:normal;transform:scaleX(1.025);transform-origin:0 0;">178</div>
<div class="t" style="left:452.2px;top:368.5px;font-size:16px;color:#000;font-weight:normal;font-style:normal;transform:scaleX(1.025);transform-origin:0 0;">male</div>
<div class="t" style="left:565.3px;top:368.5px;font-size:16px;color:#000;font-weight:normal;font-style:normal;transform:scaleX(1.025);transform-origin:0 0;">blue</div>
<div class="t" style="left:683.3px;top:368.5px;font-size:16px;color:#000;font-weight:normal;font-style:normal;transform:scaleX(1.025);transform-origin:0 0;">music</div>
<div class="t" style="left:937.82025px;top:368.5px;font-size:16px;color:#000;font-weight:normal;font-style:normal;transform:scaleX(1.025);transform-origin:0 0;">1/15/1998</div>
<div class="t" style="left:62.5px;top:390.5px;font-size:16px;color:#000;font-weight:normal;font-style:normal;transform:scaleX(1.025);transform-origin:0 0;">Clark</div>
<div class="t" style="left:230.5px;top:390.5px;font-size:16px;color:#000;font-weight:normal;font-style:normal;transform:scaleX(1.025);transform-origin:0 0;">William</div>
<div class="t" style="left:386.81855625000003px;top:390.5px;font-size:16px;color:#000;font-weight:normal;font-style:normal;transform:scaleX(1.025);transform-origin:0 0;">176</div>
<div class="t" style="left:452.2px;top:390.5px;font-size:16px;color:#000;font-weight:normal;font-style:normal;transform:scaleX(1.025);transform-origin:0 0;">male</div>
<div class="t" style="left:565.3px;top:390.5px;font-size:16px;color:#000;font-weight:normal;font-style:normal;transform:scaleX(1.025);transform-origin:0 0;">blue</div>
<div class="t" style="left:683.3px;top:390.5px;font-size:16px;color:#000;font-weight:normal;font-style:normal;transform:scaleX(1.025);transform-origin:0 0;">music</div>
<div class="t" style="left:942.3807312499999px;top:390.5px;font-size:16px;color:#000;font-weight:normal;font-style:normal;transform:scaleX(1.025);transform-origin:0 0;">2/2/1998</div>
<div class="t" style="left:62.5px;top:412.5px;font-size:16px;color:#000;font-weight:normal;font-style:normal;transform:scaleX(1.025);transform-origin:0 0;">Davis</div>
<div class="t" style="left:230.5px;top:412.5px;font-size:16px;color:#000;font-weight:normal;font-style:normal;transform:scaleX(1.025);transform-origin:0 0;">Olivia</div>
<div class="t" style="left:386.81855625000003px;top:412.5px;font-size:16px;color:#000;font-weight:normal;font-style:normal;transform:scaleX(1.025);transform-origin:0 0;">128</div>
<div class="t" style="left:452.2px;top:412.5px;font-size:16px;color:#000;font-weight:normal;font-style:normal;transform:scaleX(1.025);transform-origin:0 0;">female</div>
<div class="t" style="left:565.3px;top:412.5px;font-size:16px;color:#000;font-weight:normal;font-style:normal;transform:scaleX(1.025);transform-origin:0 0;">blue</div>
<div class="t" style="left:683.3px;top:412.5px;font-size:16px;color:#000;font-weight:normal;font-style:normal;transform:scaleX(1.025);transform-origin:0 0;">music</div>
<div class="t" style="left:933.2597687499999px;top:412.5px;font-size:16px;color:#000;font-weight:normal;font-style:normal;transform:scaleX(1.025);transform-origin:0 0;">10/28/2002</div>
<div class="t" style="left:62.5px;top:434.5px;font-size:16px;color:#000;font-weight:normal;font-style:normal;transform:scaleX(1.025);transform-origin:0 0;">Garcia</div>
<div class="t" style="left:230.5px;top:434.5px;font-size:16px;color:#000;font-weight:normal;font-style:normal;transform:scaleX(1.025);transform-origin:0 0;">Mia</div>
<div class="t" style="left:386.81855625000003px;top:434.5px;font-size:16px;color:#000;font-weight:normal;font-style:normal;transform:scaleX(1.025);transform-origin:0 0;">127</div>
<div class="t" style="left:452.2px;top:434.5px;font-size:16px;color:#000;font-weight:normal;font-style:normal;transform:scaleX(1.025);transform-origin:0 0;">female</div>
<div class="t" style="left:565.3px;top:434.5px;font-size:16px;color:#000;font-weight:normal;font-style:normal;transform:scaleX(1.025);transform-origin:0 0;">green</div>
<div class="t" style="left:683.3px;top:434.5px;font-size:16px;color:#000;font-weight:normal;font-style:normal;transform:scaleX(1.025);transform-origin:0 0;">foreign language learning</div>
<div class="t" style="left:942.3807312499999px;top:434.5px;font-size:16px;color:#000;font-weight:normal;font-style:normal;transform:scaleX(1.025);transform-origin:0 0;">1/8/2004</div>
<div class="t" style="left:62.5px;top:456.5px;font-size:16px;color:#000;font-weight:normal;font-style:normal;transform:scaleX(1.025);transform-origin:0 0;">Hall</div>
<div class="t" style="left:230.5px;top:456.5px;font-size:16px;color:#000;font-weight:normal;font-style:normal;transform:scaleX(1.025);transform-origin:0 0;">Madison</div>
<div class="t" style="left:386.81855625000003px;top:456.5px;font-size:16px;color:#000;font-weight:normal;font-style:normal;transform:scaleX(1.025);transform-origin:0 0;">131</div>
<div class="t" style="left:452.2px;top:456.5px;font-size:16px;color:#000;font-weight:normal;font-style:normal;transform:scaleX(1.025);transform-origin:0 0;">female</div>
<div class="t" style="left:565.3px;top:456.5px;font-size:16px;color:#000;font-weight:normal;font-style:normal;transform:scaleX(1.025);transform-origin:0 0;">blue</div>
<div class="t" style="left:683.3px;top:456.5px;font-size:16px;color:#000;font-weight:normal;font-style:normal;transform:scaleX(1.025);transform-origin:0 0;">music</div>
<div class="t" style="left:942.3807312499999px;top:456.5px;font-size:16px;color:#000;font-weight:normal;font-style:normal;transform:scaleX(1.025);transform-origin:0 0;">8/6/2002</div>
<div class="t" style="left:62.5px;top:478.5px;font-size:16px;color:#000;font-weight:normal;font-style:normal;transform:scaleX(1.025);transform-origin:0 0;">Harris</div>
<div class="t" style="left:230.5px;top:478.5px;font-size:16px;color:#000;font-weight:normal;font-style:normal;transform:scaleX(1.025);transform-origin:0 0;">Alexander</div>
<div class="t" style="left:386.81855625000003px;top:478.5px;font-size:16px;color:#000;font-weight:normal;font-style:normal;transform:scaleX(1.025);transform-origin:0 0;">149</div>
<div class="t" style="left:452.2px;top:478.5px;font-size:16px;color:#000;font-weight:normal;font-style:normal;transform:scaleX(1.025);transform-origin:0 0;">male</div>
<div class="t" style="left:565.3px;top:478.5px;font-size:16px;color:#000;font-weight:normal;font-style:normal;transform:scaleX(1.025);transform-origin:0 0;">blue</div>
<div class="t" style="left:683.3px;top:478.5px;font-size:16px;color:#000;font-weight:normal;font-style:normal;transform:scaleX(1.025);transform-origin:0 0;">music</div>
<div class="t" style="left:937.82025px;top:478.5px;font-size:16px;color:#000;font-weight:normal;font-style:normal;transform:scaleX(1.025);transform-origin:0 0;">9/16/1999</div>
<div class="t" style="left:62.5px;top:500.5px;font-size:16px;color:#000;font-weight:normal;font-style:normal;transform:scaleX(1.025);transform-origin:0 0;">Jackson</div>
<div class="t" style="left:230.5px;top:500.5px;font-size:16px;color:#000;font-weight:normal;font-style:normal;transform:scaleX(1.025);transform-origin:0 0;">Henry</div>
<div class="t" style="left:386.81855625000003px;top:500.5px;font-size:16px;color:#000;font-weight:normal;font-style:normal;transform:scaleX(1.025);transform-origin:0 0;">126</div>
<div class="t" style="left:452.2px;top:500.5px;font-size:16px;color:#000;font-weight:normal;font-style:normal;transform:scaleX(1.025);transform-origin:0 0;">male</div>
<div class="t" style="left:565.3px;top:500.5px;font-size:16px;color:#000;font-weight:normal;font-style:normal;transform:scaleX(1.025);transform-origin:0 0;">blue</div>
<div class="t" style="left:683.3px;top:500.5px;font-size:16px;color:#000;font-weight:normal;font-style:normal;transform:scaleX(1.025);transform-origin:0 0;">music</div>
<div class="t" style="left:937.82025px;top:500.5px;font-size:16px;color:#000;font-weight:normal;font-style:normal;transform:scaleX(1.025);transform-origin:0 0;">9/22/2003</div>
<div class="t" style="left:62.5px;top:522.5px;font-size:16px;color:#000;font-weight:normal;font-style:normal;transform:scaleX(1.025);transform-origin:0 0;">Johnson</div>
<div class="t" style="left:230.5px;top:522.5px;font-size:16px;color:#000;font-weight:normal;font-style:normal;transform:scaleX(1.025);transform-origin:0 0;">Owen</div>
<div class="t" style="left:386.81855625000003px;top:522.5px;font-size:16px;color:#000;font-weight:normal;font-style:normal;transform:scaleX(1.025);transform-origin:0 0;">136</div>
<div class="t" style="left:452.2px;top:522.5px;font-size:16px;color:#000;font-weight:normal;font-style:normal;transform:scaleX(1.025);transform-origin:0 0;">male</div>
<div class="t" style="left:565.3px;top:522.5px;font-size:16px;color:#000;font-weight:normal;font-style:normal;transform:scaleX(1.025);transform-origin:0 0;">blue</div>
<div class="t" style="left:683.3px;top:522.5px;font-size:16px;color:#000;font-weight:normal;font-style:normal;transform:scaleX(1.025);transform-origin:0 0;">music</div>
<div class="t" style="left:937.82025px;top:522.5px;font-size:16px;color:#000;font-weight:normal;font-style:normal;transform:scaleX(1.025);transform-origin:0 0;">6/29/2004</div>
<div class="t" style="left:62.5px;top:544.5px;font-size:16px;color:#000;font-weight:normal;font-style:normal;transform:scaleX(1.025);transform-origin:0 0;">Lee</div>
<div class="t" style="left:230.5px;top:544.5px;font-size:16px;color:#000;font-weight:normal;font-style:normal;transform:scaleX(1.025);transform-origin:0 0;">Carter</div>
<div class="t" style="left:386.81855625000003px;top:544.5px;font-size:16px;color:#000;font-weight:normal;font-style:normal;transform:scaleX(1.025);transform-origin:0 0;">168</div>
<div class="t" style="left:452.2px;top:544.5px;font-size:16px;color:#000;font-weight:normal;font-style:normal;transform:scaleX(1.025);transform-origin:0 0;">male</div>
<div class="t" style="left:565.3px;top:544.5px;font-size:16px;color:#000;font-weight:normal;font-style:normal;transform:scaleX(1.025);transform-origin:0 0;">blue</div>
<div class="t" style="left:683.3px;top:544.5px;font-size:16px;color:#000;font-weight:normal;font-style:normal;transform:scaleX(1.025);transform-origin:0 0;">music</div>
<div class="t" style="left:937.82025px;top:544.5px;font-size:16px;color:#000;font-weight:normal;font-style:normal;transform:scaleX(1.025);transform-origin:0 0;">3/31/1998</div>
<div class="t" style="left:62.5px;top:566.5px;font-size:16px;color:#000;font-weight:normal;font-style:normal;transform:scaleX(1.025);transform-origin:0 0;">Lewis</div>
<div class="t" style="left:230.5px;top:566.5px;font-size:16px;color:#000;font-weight:normal;font-style:normal;transform:scaleX(1.025);transform-origin:0 0;">Sofia</div>
<div class="t" style="left:386.81855625000003px;top:566.5px;font-size:16px;color:#000;font-weight:normal;font-style:normal;transform:scaleX(1.025);transform-origin:0 0;">142</div>
<div class="t" style="left:452.2px;top:566.5px;font-size:16px;color:#000;font-weight:normal;font-style:normal;transform:scaleX(1.025);transform-origin:0 0;">female</div>
<div class="t" style="left:565.3px;top:566.5px;font-size:16px;color:#000;font-weight:normal;font-style:normal;transform:scaleX(1.025);transform-origin:0 0;">blue</div>
<div class="t" style="left:683.3px;top:566.5px;font-size:16px;color:#000;font-weight:normal;font-style:normal;transform:scaleX(1.025);transform-origin:0 0;">wrestling</div>
<div class="t" style="left:937.82025px;top:566.5px;font-size:16px;color:#000;font-weight:normal;font-style:normal;transform:scaleX(1.025);transform-origin:0 0;">3/26/2001</div>
<div class="t" style="left:62.5px;top:588.5px;font-size:16px;color:#000;font-weight:normal;font-style:normal;transform:scaleX(1.025);transform-origin:0 0;">Martin</div>
<div class="t" style="left:230.5px;top:588.5px;font-size:16px;color:#000;font-weight:normal;font-style:normal;transform:scaleX(1.025);transform-origin:0 0;">Zoey</div>
<div class="t" style="left:386.81855625000003px;top:588.5px;font-size:16px;color:#000;font-weight:normal;font-style:normal;transform:scaleX(1.025);transform-origin:0 0;">153</div>
<div class="t" style="left:452.2px;top:588.5px;font-size:16px;color:#000;font-weight:normal;font-style:normal;transform:scaleX(1.025);transform-origin:0 0;">female</div>
<div class="t" style="left:565.3px;top:588.5px;font-size:16px;color:#000;font-weight:normal;font-style:normal;transform:scaleX(1.025);transform-origin:0 0;">blue</div>
<div class="t" style="left:683.3px;top:588.5px;font-size:16px;color:#000;font-weight:normal;font-style:normal;transform:scaleX(1.025);transform-origin:0 0;">dancing</div>
<div class="t" style="left:933.2597687499999px;top:588.5px;font-size:16px;color:#000;font-weight:normal;font-style:normal;transform:scaleX(1.025);transform-origin:0 0;">12/28/1999</div>
<div class="t" style="left:62.5px;top:610.5px;font-size:16px;color:#000;font-weight:normal;font-style:normal;transform:scaleX(1.025);transform-origin:0 0;">Miller</div>
<div class="t" style="left:230.5px;top:610.5px;font-size:16px;color:#000;font-weight:normal;font-style:normal;transform:scaleX(1.025);transform-origin:0 0;">Ryan</div>
<div class="t" style="left:386.81855625000003px;top:610.5px;font-size:16px;color:#000;font-weight:normal;font-style:normal;transform:scaleX(1.025);transform-origin:0 0;">138</div>
<div class="t" style="left:452.2px;top:610.5px;font-size:16px;color:#000;font-weight:normal;font-style:normal;transform:scaleX(1.025);transform-origin:0 0;">male</div>
<div class="t" style="left:565.3px;top:610.5px;font-size:16px;color:#000;font-weight:normal;font-style:normal;transform:scaleX(1.025);transform-origin:0 0;">green</div>
<div class="t" style="left:683.3px;top:610.5px;font-size:16px;color:#000;font-weight:normal;font-style:normal;transform:scaleX(1.025);transform-origin:0 0;">foreign language learning</div>
<div class="t" style="left:937.82025px;top:610.5px;font-size:16px;color:#000;font-weight:normal;font-style:normal;transform:scaleX(1.025);transform-origin:0 0;">7/12/2000</div>
<div class="t" style="left:62.5px;top:632.5px;font-size:16px;color:#000;font-weight:normal;font-style:normal;transform:scaleX(1.025);transform-origin:0 0;">Moore</div>
<div class="t" style="left:230.5px;top:632.5px;font-size:16px;color:#000;font-weight:normal;font-style:normal;transform:scaleX(1.025);transform-origin:0 0;">Wyatt</div>
<div class="t" style="left:386.81855625000003px;top:632.5px;font-size:16px;color:#000;font-weight:normal;font-style:normal;transform:scaleX(1.025);transform-origin:0 0;">165</div>
<div class="t" style="left:452.2px;top:632.5px;font-size:16px;color:#000;font-weight:normal;font-style:normal;transform:scaleX(1.025);transform-origin:0 0;">male</div>
<div class="t" style="left:565.3px;top:632.5px;font-size:16px;color:#000;font-weight:normal;font-style:normal;transform:scaleX(1.025);transform-origin:0 0;">blue</div>
<div class="t" style="left:683.3px;top:632.5px;font-size:16px;color:#000;font-weight:normal;font-style:normal;transform:scaleX(1.025);transform-origin:0 0;">football</div>
<div class="t" style="left:937.82025px;top:632.5px;font-size:16px;color:#000;font-weight:normal;font-style:normal;transform:scaleX(1.025);transform-origin:0 0;">4/18/1998</div>
<div class="t" style="left:62.5px;top:654.5px;font-size:16px;color:#000;font-weight:normal;font-style:normal;transform:scaleX(1.025);transform-origin:0 0;">Smith</div>
<div class="t" style="left:230.5px;top:654.5px;font-size:16px;color:#000;font-weight:normal;font-style:normal;transform:scaleX(1.025);transform-origin:0 0;">Andrew</div>
<div class="t" style="left:386.81855625000003px;top:654.5px;font-size:16px;color:#000;font-weight:normal;font-style:normal;transform:scaleX(1.025);transform-origin:0 0;">170</div>
<div class="t" style="left:452.2px;top:654.5px;font-size:16px;color:#000;font-weight:normal;font-style:normal;transform:scaleX(1.025);transform-origin:0 0;">male</div>
<div class="t" style="left:565.3px;top:654.5px;font-size:16px;color:#000;font-weight:normal;font-style:normal;transform:scaleX(1.025);transform-origin:0 0;">brown</div>
<div class="t" style="left:683.3px;top:654.5px;font-size:16px;color:#000;font-weight:normal;font-style:normal;transform:scaleX(1.025);transform-origin:0 0;">music</div>
<div class="t" style="left:937.82025px;top:654.5px;font-size:16px;color:#000;font-weight:normal;font-style:normal;transform:scaleX(1.025);transform-origin:0 0;">2/20/1997</div>
<div class="t" style="left:62.5px;top:676.5px;font-size:16px;color:#000;font-weight:normal;font-style:normal;transform:scaleX(1.025);transform-origin:0 0;">Taylor</div>
<div class="t" style="left:230.5px;top:676.5px;font-size:16px;color:#000;font-weight:normal;font-style:normal;transform:scaleX(1.025);transform-origin:0 0;">Jacob</div>
<div class="t" style="left:386.81855625000003px;top:676.5px;font-size:16px;color:#000;font-weight:normal;font-style:normal;transform:scaleX(1.025);transform-origin:0 0;">149</div>
<div class="t" style="left:452.2px;top:676.5px;font-size:16px;color:#000;font-weight:normal;font-style:normal;transform:scaleX(1.025);transform-origin:0 0;">male</div>
<div class="t" style="left:565.3px;top:676.5px;font-size:16px;color:#000;font-weight:normal;font-style:normal;transform:scaleX(1.025);transform-origin:0 0;">gray</div>
<div class="t" style="left:683.3px;top:676.5px;font-size:16px;color:#000;font-weight:normal;font-style:normal;transform:scaleX(1.025);transform-origin:0 0;">singing</div>
<div class="t" style="left:937.82025px;top:676.5px;font-size:16px;color:#000;font-weight:normal;font-style:normal;transform:scaleX(1.025);transform-origin:0 0;">1/13/1999</div>
<div class="t" style="left:62.5px;top:698.5px;font-size:16px;color:#000;font-weight:normal;font-style:normal;transform:scaleX(1.025);transform-origin:0 0;">Thomas</div>
<div class="t" style="left:230.5px;top:698.5px;font-size:16px;color:#000;font-weight:normal;font-style:normal;transform:scaleX(1.025);transform-origin:0 0;">Emily</div>
<div class="t" style="left:386.81855625000003px;top:698.5px;font-size:16px;color:#000;font-weight:normal;font-style:normal;transform:scaleX(1.025);transform-origin:0 0;">121</div>
<div class="t" style="left:452.2px;top:698.5px;font-size:16px;color:#000;font-weight:normal;font-style:normal;transform:scaleX(1.025);transform-origin:0 0;">female</div>
<div class="t" style="left:565.3px;top:698.5px;font-size:16px;color:#000;font-weight:normal;font-style:normal;transform:scaleX(1.025);transform-origin:0 0;">green</div>
<div class="t" style="left:683.3px;top:698.5px;font-size:16px;color:#000;font-weight:normal;font-style:normal;transform:scaleX(1.025);transform-origin:0 0;">foreign language learning</div>
<div class="t" style="left:937.82025px;top:698.5px;font-size:16px;color:#000;font-weight:normal;font-style:normal;transform:scaleX(1.025);transform-origin:0 0;">1/26/2005</div>
<div class="t" style="left:62.5px;top:720.5px;font-size:16px;color:#000;font-weight:normal;font-style:normal;transform:scaleX(1.025);transform-origin:0 0;">Thompson</div>
<div class="t" style="left:230.5px;top:720.5px;font-size:16px;color:#000;font-weight:normal;font-style:normal;transform:scaleX(1.025);transform-origin:0 0;">Logan</div>
<div class="t" style="left:386.81855625000003px;top:720.5px;font-size:16px;color:#000;font-weight:normal;font-style:normal;transform:scaleX(1.025);transform-origin:0 0;">139</div>
<div class="t" style="left:452.2px;top:720.5px;font-size:16px;color:#000;font-weight:normal;font-style:normal;transform:scaleX(1.025);transform-origin:0 0;">male</div>
<div class="t" style="left:565.3px;top:720.5px;font-size:16px;color:#000;font-weight:normal;font-style:normal;transform:scaleX(1.025);transform-origin:0 0;">gray</div>
<div class="t" style="left:683.3px;top:720.5px;font-size:16px;color:#000;font-weight:normal;font-style:normal;transform:scaleX(1.025);transform-origin:0 0;">wrestling</div>
<div class="t" style="left:942.3807312499999px;top:720.5px;font-size:16px;color:#000;font-weight:normal;font-style:normal;transform:scaleX(1.025);transform-origin:0 0;">6/6/2001</div>
<div class="t" style="left:62.5px;top:742.5px;font-size:16px;color:#000;font-weight:normal;font-style:normal;transform:scaleX(1.025);transform-origin:0 0;">Walker</div>
<div class="t" style="left:230.5px;top:742.5px;font-size:16px;color:#000;font-weight:normal;font-style:normal;transform:scaleX(1.025);transform-origin:0 0;">Ethan</div>
<div class="t" style="left:386.81855625000003px;top:742.5px;font-size:16px;color:#000;font-weight:normal;font-style:normal;transform:scaleX(1.025);transform-origin:0 0;">147</div>
<div class="t" style="left:452.2px;top:742.5px;font-size:16px;color:#000;font-weight:normal;font-style:normal;transform:scaleX(1.025);transform-origin:0 0;">male</div>
<div class="t" style="left:565.3px;top:742.5px;font-size:16px;color:#000;font-weight:normal;font-style:normal;transform:scaleX(1.025);transform-origin:0 0;">green</div>
<div class="t" style="left:683.3px;top:742.5px;font-size:16px;color:#000;font-weight:normal;font-style:normal;transform:scaleX(1.025);transform-origin:0 0;">foreign language learning</div>
<div class="t" style="left:937.82025px;top:742.5px;font-size:16px;color:#000;font-weight:normal;font-style:normal;transform:scaleX(1.025);transform-origin:0 0;">6/24/2003</div>
<div class="t" style="left:62.5px;top:764.5px;font-size:16px;color:#000;font-weight:normal;font-style:normal;transform:scaleX(1.025);transform-origin:0 0;">White</div>
<div class="t" style="left:230.5px;top:764.5px;font-size:16px;color:#000;font-weight:normal;font-style:normal;transform:scaleX(1.025);transform-origin:0 0;">Charlotte</div>
<div class="t" style="left:386.81855625000003px;top:764.5px;font-size:16px;color:#000;font-weight:normal;font-style:normal;transform:scaleX(1.025);transform-origin:0 0;">143</div>
<div class="t" style="left:452.2px;top:764.5px;font-size:16px;color:#000;font-weight:normal;font-style:normal;transform:scaleX(1.025);transform-origin:0 0;">female</div>
<div class="t" style="left:565.3px;top:764.5px;font-size:16px;color:#000;font-weight:normal;font-style:normal;transform:scaleX(1.025);transform-origin:0 0;">green</div>
<div class="t" style="left:683.3px;top:764.5px;font-size:16px;color:#000;font-weight:normal;font-style:normal;transform:scaleX(1.025);transform-origin:0 0;">football</div>
<div class="t" style="left:937.82025px;top:764.5px;font-size:16px;color:#000;font-weight:normal;font-style:normal;transform:scaleX(1.025);transform-origin:0 0;">5/19/2000</div>
<svg class="a" style="left:59px;top:271px;" width="1012" height="512" viewBox="0 0 1012 512"><path d="M2 2.6H1010" stroke="#fff" stroke-width="1.6"/><g fill="none" stroke="#217346"><path d="M2 2.6H1010" stroke-width="1.6" stroke-dasharray="7 2"/><path d="M2.5 2V512M1010 2V512" stroke-width="1.5" stroke-dasharray="7 2"/></g></svg>
<svg class="a" style="left:58px;top:270px;" width="174" height="34" viewBox="0 0 174 34"><rect x="2" y="2" width="169" height="27" fill="none" stroke="#217346" stroke-width="2"/><rect x="166" y="26" width="6" height="6" fill="#217346" stroke="#fff" stroke-width="1"/></svg>
<div class="a" style="left:1380px;top:256px;width:21px;height:527px;background:#f0f0f0"></div>
<div class="a" style="left:1383px;top:258px;width:15px;height:15px;background:#fff;border:1px solid #bdbdbd"></div>
<svg class="a" style="left:1386px;top:261px;" width="10" height="7" viewBox="0 0 10 7"><path d="M0 6H9L4.5 1Z" fill="#777"/></svg>
<div class="a" style="left:1383px;top:274px;width:15px;height:407px;background:#fff;border:1px solid #c4c4c4"></div>
<div class="a" style="left:1383px;top:770px;width:15px;height:15px;background:#fff;border:1px solid #bdbdbd"></div>
<svg class="a" style="left:1386px;top:775px;" width="10" height="7" viewBox="0 0 10 7"><path d="M0 1H9L4.5 6Z" fill="#777"/></svg>
<div class="a" style="left:538px;top:320px;width:242px;height:240px;box-shadow:0 3px 10px 3px rgba(0,0,0,.72);border-radius:7px 7px 5px 5px;border:1px solid #33414e;background:linear-gradient(180deg,#c3d9ee 0%,#b5cfe8 6%,#aac6e2 10%,#bcd5ee 18%,#c7dcf1 60%,#b9d2ec 100%)"></div>
<div class="a" style="left:539px;top:321px;width:240px;height:26px;border-radius:6px 6px 0 0;background:linear-gradient(90deg,rgba(255,255,255,.25),rgba(170,200,230,.2) 30%,rgba(255,255,255,.35) 55%,rgba(160,190,220,.2) 80%,rgba(255,255,255,.2))"></div>
<div class="t" style="left:546.5px;top:327.9px;font-size:12.2px;color:#000;font-weight:normal;font-style:normal;transform:scaleX(0.967);transform-origin:0 0;">Advanced Filter</div>
<div class="a" style="left:697px;top:320px;width:29px;height:19px;border:1px solid #5f6f80;border-top:none;border-radius:0 0 0 4px;background:linear-gradient(180deg,#e3ebf3 0%,#cfdae6 45%,#a9b8c8 50%,#b9c6d3 100%)"></div>
<div class="a" style="left:725px;top:320px;width:48px;height:19px;border:1px solid #6b3a30;border-top:none;border-radius:0 0 4px 0;background:linear-gradient(180deg,#e9a497 0%,#d8806f 45%,#c3422b 50%,#cf5a3f 80%,#e28b6d 100%)"></div>
<svg class="a" style="left:697px;top:320px;" width="76" height="19" viewBox="0 0 76 19"><text x="9.5" y="14.5" font-family="Liberation Sans" font-weight="bold" font-size="14" fill="#fff" stroke="#3a4450" stroke-width="1.6" paint-order="stroke">?</text><path d="M44 5L53 13M53 5L44 13" stroke="#4a2a22" stroke-width="4"/><path d="M44 5L53 13M53 5L44 13" stroke="#fff" stroke-width="2.4"/></svg>
<div class="a" style="left:539px;top:346px;width:6px;height:210px;background:linear-gradient(90deg,#a9c6e3 0%,#e9f4fd 50%,#a9c6e3 100%)"></div>
<div class="a" style="left:773px;top:346px;width:6px;height:210px;background:linear-gradient(90deg,#a9c6e3 0%,#e9f4fd 50%,#a9c6e3 100%)"></div>
<div class="a" style="left:545px;top:554px;width:228px;height:5px;background:linear-gradient(180deg,#a9c6e3 0%,#e9f4fd 50%,#a9c6e3 100%)"></div>
<div class="a" style="left:545px;top:348px;width:228px;height:206px;background:#f0f0f0;border:1px solid #6f8194"></div>
<div class="t" style="left:552px;top:357.1px;font-size:11.7px;color:#000;font-weight:normal;font-style:normal;transform:scaleX(1.015);transform-origin:0 0;">Action</div>
<div class="a" style="left:589px;top:362px;width:181px;height:1px;background:#d5dfe5"></div>
<svg class="a" style="left:560px;top:377px;" width="14" height="14" viewBox="0 0 14 14"><defs><radialGradient id="rg1" cx=".4" cy=".35" r=".7"><stop offset="0" stop-color="#9de0ff"/><stop offset=".5" stop-color="#2a8ad0"/><stop offset="1" stop-color="#0b4f8a"/></radialGradient><linearGradient id="rb" x1="0" y1="0" x2="1" y2="1"><stop offset="0" stop-color="#e6e6e6"/><stop offset="1" stop-color="#fff"/></linearGradient></defs><circle cx="7" cy="7" r="6" fill="url(#rb)" stroke="#8e8f8f"/><circle cx="7" cy="7" r="3.3" fill="url(#rg1)"/></svg>
<div class="t" style="left:578px;top:378.1px;font-size:11.7px;color:#000;font-weight:normal;font-style:normal;transform:scaleX(1.000);transform-origin:0 0;">Filter the list, in-place</div>
<div class="a" style="left:578px;top:389px;width:6px;height:1px;background:#000"></div>
<svg class="a" style="left:560px;top:396px;" width="14" height="14" viewBox="0 0 14 14"><circle cx="7" cy="7" r="6" fill="url(#rb)" stroke="#8e8f8f"/><circle cx="7" cy="7" r="4" fill="#ececec" stroke="#d0d0d0"/></svg>
<div class="t" style="left:578px;top:397.1px;font-size:11.7px;color:#000;font-weight:normal;font-style:normal;transform:scaleX(1.013);transform-origin:0 0;">Copy to another location</div>
<div class="a" style="left:585px;top:408px;width:7px;height:1px;background:#000"></div>
<div class="t" style="left:552px;top:423.4px;font-size:11.7px;color:#000;font-weight:normal;font-style:normal;transform:scaleX(0.970);transform-origin:0 0;">List range:</div>
<div class="a" style="left:552px;top:434px;width:5px;height:1px;background:#000"></div>
<div class="t" style="left:552px;top:446.1px;font-size:11.7px;color:#000;font-weight:normal;font-style:normal;transform:scaleX(0.985);transform-origin:0 0;">Criteria range:</div>
<div class="a" style="left:552px;top:457px;width:7px;height:1px;background:#000"></div>
<div class="t" style="left:552px;top:469.1px;font-size:11.7px;color:#8d8d8d;font-weight:normal;font-style:normal;transform:scaleX(0.964);transform-origin:0 0;">Copy to:</div>
<div class="a" style="left:634px;top:419px;width:132px;height:20px;background:#fff;border:1px solid #abadb3;border-top-color:#a0a4a8"></div>
<div class="a" style="left:744px;top:420px;width:21px;height:18px;background:#fff;border:1.5px solid #707070;border-radius:3px"></div>
<svg class="a" style="left:747px;top:423px;" width="15" height="12" viewBox="0 0 15 12"><rect x="0" y="0" width="15" height="12" fill="#e9f0fa"/><path d="M0 1.5H15M0 4.5H15M0 7.5H15M0 10.5H15" stroke="#3d6fc4" stroke-width="1.3"/><path d="M5.5 0V12M10.5 0V12" stroke="#fff" stroke-width="1"/><rect x="0" y="0" width="5" height="3" fill="#1d3d86"/><rect x="9" y="6" width="6" height="6" fill="#8fb2e8" opacity=".6"/><path d="M5 3L11.5 3.5L9.8 5.4L13.8 9.4L11.6 11.6L7.6 7.6L5.6 9.3Z" fill="#d8341a" stroke="#9a1c08" stroke-width=".5"/></svg>
<div class="a" style="left:634px;top:442px;width:132px;height:20px;background:#fff;border:1px solid #abadb3;border-top-color:#a0a4a8"></div>
<div class="a" style="left:744px;top:443px;width:21px;height:18px;background:#fff;border:1.5px solid #707070;border-radius:3px"></div>
<svg class="a" style="left:747px;top:446px;" width="15" height="12" viewBox="0 0 15 12"><rect x="0" y="0" width="15" height="12" fill="#e9f0fa"/><path d="M0 1.5H15M0 4.5H15M0 7.5H15M0 10.5H15" stroke="#3d6fc4" stroke-width="1.3"/><path d="M5.5 0V12M10.5 0V12" stroke="#fff" stroke-width="1"/><rect x="0" y="0" width="5" height="3" fill="#1d3d86"/><rect x="9" y="6" width="6" height="6" fill="#8fb2e8" opacity=".6"/><path d="M5 3L11.5 3.5L9.8 5.4L13.8 9.4L11.6 11.6L7.6 7.6L5.6 9.3Z" fill="#d8341a" stroke="#9a1c08" stroke-width=".5"/></svg>
<div class="a" style="left:634px;top:465px;width:132px;height:20px;background:#fff;border:1px solid #abadb3;border-top-color:#a0a4a8"></div>
<div class="a" style="left:637px;top:468px;width:104px;height:14px;background:#eeeeee"></div>
<div class="a" style="left:744px;top:466px;width:21px;height:18px;background:#fff;border:1.5px solid #707070;border-radius:3px"></div>
<svg class="a" style="left:747px;top:469px;" width="15" height="12" viewBox="0 0 15 12"><rect x="0" y="0" width="15" height="12" fill="#e9f0fa"/><path d="M0 1.5H15M0 4.5H15M0 7.5H15M0 10.5H15" stroke="#3d6fc4" stroke-width="1.3"/><path d="M5.5 0V12M10.5 0V12" stroke="#fff" stroke-width="1"/><rect x="0" y="0" width="5" height="3" fill="#1d3d86"/><rect x="9" y="6" width="6" height="6" fill="#8fb2e8" opacity=".6"/><path d="M5 3L11.5 3.5L9.8 5.4L13.8 9.4L11.6 11.6L7.6 7.6L5.6 9.3Z" fill="#d8341a" stroke="#9a1c08" stroke-width=".5"/></svg>
<div class="a" style="left:638px;top:423px;width:60px;height:13px;background:#cccccc"></div>
<div class="t" style="left:638.5px;top:424.1px;font-size:11.7px;color:#000;font-weight:normal;font-style:normal;transform:scaleX(0.898);transform-origin:0 0;">$A$1:$G$26</div>
<svg class="a" style="left:551px;top:496px;" width="14" height="14" viewBox="0 0 14 14"><defs><linearGradient id="cbg" x1="0" y1="0" x2="1" y2="1"><stop offset="0" stop-color="#dcdcdc"/><stop offset="1" stop-color="#fbfbfb"/></linearGradient></defs><rect x=".5" y=".5" width="13" height="13" fill="#f4f4f4" stroke="#8e8f8f"/><rect x="2.5" y="2.5" width="9" height="9" fill="url(#cbg)" stroke="#c8c8c8"/></svg>
<div class="t" style="left:569px;top:498.1px;font-size:11.7px;color:#000;font-weight:normal;font-style:normal;transform:scaleX(0.999);transform-origin:0 0;">Unique records only</div>
<div class="a" style="left:610px;top:509px;width:5px;height:1px;background:#000"></div>
<div class="a" style="left:607px;top:523px;width:74px;height:22px;border:1px solid #3c9bd6;border-radius:3px;background:linear-gradient(180deg,#f4f8fa 0%,#e9eef1 48%,#d6dde2 52%,#cfd7dc 100%);box-shadow:inset 0 0 0 1px #8fd3f5"></div>
<div class="t" style="left:637px;top:528.1px;font-size:11.7px;color:#000;font-weight:normal;font-style:normal;transform:scaleX(0.887);transform-origin:0 0;">OK</div>
<div class="a" style="left:691px;top:523px;width:74px;height:22px;border:1px solid #707070;border-radius:3px;background:linear-gradient(180deg,#f2f2f2 0%,#ebebeb 48%,#dddddd 52%,#cfcfcf 100%)"></div>
<div class="t" style="left:711px;top:528.1px;font-size:11.7px;color:#000;font-weight:normal;font-style:normal;transform:scaleX(0.961);transform-origin:0 0;">Cancel</div>
<svg class="a" style="left:796px;top:527px;" width="14" height="22" viewBox="0 0 14 22"><path d="M1 1V17L5 13L8 20L11 19L8 12H13Z" fill="#fff" stroke="#000" stroke-width="1"/></svg>
<div class="a" style="left:35px;top:783px;width:1345px;height:29px;background:#f3f3f3"></div>
<div class="a" style="left:35px;top:783px;width:1345px;height:1px;background:#d8d8d8"></div>
<svg class="a" style="left:60px;top:792px;" width="40" height="12" viewBox="0 0 40 12"><path d="M7 2V10L3 6Z" fill="#c4c4c4"/><path d="M31 2V10L35 6Z" fill="#c4c4c4"/></svg>
<div class="a" style="left:135px;top:783px;width:79px;height:26px;background:#fff;border-left:1px solid #d0d0d0;border-right:1px solid #d0d0d0"></div>
<div class="a" style="left:135px;top:807px;width:79px;height:2px;background:#217346"></div>
<div class="t" style="left:147px;top:790.5px;font-size:13px;color:#217346;font-weight:bold;font-style:normal;transform:scaleX(0.971);transform-origin:0 0;">Students</div>
<div class="t" style="left:226px;top:790.5px;font-size:13px;color:#444;font-weight:normal;font-style:normal;transform:scaleX(0.922);transform-origin:0 0;">Sheet1</div>
<div class="a" style="left:277px;top:788px;width:1px;height:19px;background:#c8c8c8"></div>
<svg class="a" style="left:310px;top:789px;" width="18" height="18" viewBox="0 0 18 18"><circle cx="8.5" cy="9" r="7.5" fill="none" stroke="#666" stroke-width="1.2"/><path d="M8.5 5V13M4.5 9H12.5" stroke="#666" stroke-width="1.6"/></svg>
<svg class="a" style="left:852px;top:792px;" width="6" height="14" viewBox="0 0 6 14"><circle cx="3" cy="2" r="1" fill="#999"/><circle cx="3" cy="7" r="1" fill="#999"/><circle cx="3" cy="12" r="1" fill="#999"/></svg>
<div class="a" style="left:871px;top:791px;width:509px;height:15px;background:#fff;border:1px solid #bdbdbd"></div>
<div class="a" style="left:871px;top:791px;width:15px;height:15px;background:#fff;border:1px solid #bdbdbd"></div>
<svg class="a" style="left:875px;top:794px;" width="8" height="9" viewBox="0 0 8 9"><path d="M6 0V8L1.5 4Z" fill="#777"/></svg>
<div class="a" style="left:886px;top:792px;width:4px;height:13px;background:#e0e0e0"></div>
<div class="a" style="left:1365px;top:791px;width:15px;height:15px;background:#fff;border:1px solid #bdbdbd"></div>
<svg class="a" style="left:1369px;top:794px;" width="8" height="9" viewBox="0 0 8 9"><path d="M2 0V8L6.5 4Z" fill="#777"/></svg>
<div class="a" style="left:1320px;top:792px;width:45px;height:13px;background:#e6e6e6"></div>
<div class="a" style="left:1380px;top:783px;width:21px;height:29px;background:#f0f0f0"></div>
<div class="a" style="left:35px;top:812px;width:1366px;height:21px;background:#217346"></div>
<div class="t" style="left:42.3px;top:817.6px;font-size:11.8px;color:#fff;font-weight:normal;font-style:normal;transform:scaleX(0.849);transform-origin:0 0;">POINT</div>
<svg class="a" style="left:92px;top:815px;" width="16" height="16" viewBox="0 0 16 16"><path d="M1.8 8V13.5H13.5V2.2H7.5" fill="none" stroke="#fff" stroke-width="1.1"/><rect x="7" y="1.8" width="6.8" height="1.6" fill="#fff"/><circle cx="3.9" cy="3.8" r="3.1" fill="#e8f0ea"/><path d="M4 8.5H6M7 8.5H9M10 8.5H12M4 11H6M7 11H9M10 11H12" stroke="#fff" stroke-width="1.1"/></svg>
<svg class="a" style="left:1120px;top:815px;" width="16" height="15" viewBox="0 0 16 15"><rect x="1.5" y="1.5" width="12" height="12" fill="none" stroke="#fff" stroke-width="1.2"/><path d="M5.5 1.5V13.5M9.5 1.5V13.5M1.5 5.5H13.5M1.5 9.5H13.5" stroke="#fff"/></svg>
<svg class="a" style="left:1158px;top:815px;" width="16" height="15" viewBox="0 0 16 15"><rect x="1.5" y="1.5" width="13" height="13" fill="none" stroke="#fff" stroke-width="1.2"/><rect x="4.5" y="4.5" width="7" height="7" fill="none" stroke="#fff"/><path d="M6 6.5H10M6 8.5H10M6 10H10" stroke="#fff" stroke-width=".8"/></svg>
<svg class="a" style="left:1196px;top:815px;" width="16" height="15" viewBox="0 0 16 15"><rect x="1.5" y="1.5" width="13" height="13" fill="none" stroke="#fff" stroke-width="1.2"/><rect x="2" y="2" width="3" height="7" fill="#fff"/><rect x="7" y="2" width="3" height="7" fill="#fff"/><path d="M1.5 9.5H14.5" stroke="#fff"/></svg>
<svg class="a" style="left:1226px;top:816px;" width="130" height="14" viewBox="0 0 130 14"><path d="M2 7H6" stroke="#1a5c38" stroke-width="1.6"/><path d="M12 7H112M62 3.5V10.5" stroke="#fff" stroke-width="1.2"/><path d="M116 7H126M121 2V12" stroke="#1a5c38" stroke-width="1.8"/></svg>
<div class="t" style="left:1365px;top:816.8px;font-size:11.8px;color:#a9d5b2;font-weight:normal;font-style:normal;transform:scaleX(0.895);transform-origin:0 0;">100%</div>
<div class="a" style="left:35px;top:833px;width:1366px;height:1px;background:#1a2a20"></div>
<div class="a" style="left:35px;top:834px;width:1366px;height:1px;background:#a7b6bd"></div>
<div class="a" style="left:95px;top:834px;width:318px;height:1px;background:#f2f2f2"></div>
<div class="a" style="left:35px;top:835px;width:1366px;height:4px;background:#b6b4b1"></div>
<div class="a" style="left:35px;top:835px;width:407px;height:4px;background:#fe6a2a"></div>
<div class="a" style="left:35px;top:839px;width:1366px;height:33px;background:#e9e9e9"></div>
<svg class="a" style="left:46px;top:844px;" width="20" height="24" viewBox="0 0 20 24"><path d="M3 4.3V20.8L16.8 12.5Z" fill="#9a9a9a"/></svg>
<svg class="a" style="left:78px;top:845px;" width="24" height="24" viewBox="0 0 24 24"><path d="M6.3 7A7.6 7.6 0 1 0 12.5 4.6" fill="none" stroke="#9a9a9a" stroke-width="2.3"/><path d="M13.5 1L8 5.2L13 8.8Z" fill="#9a9a9a"/><text x="6.4" y="15.6" font-size="8.6" font-weight="bold" fill="#9a9a9a" font-family="Liberation Sans" letter-spacing="-.6">10</text></svg>
<svg class="a" style="left:113px;top:846px;" width="18" height="22" viewBox="0 0 18 22"><path d="M1 2H9.5L15 7.5V19H1Z" fill="#9a9a9a"/><path d="M10.5 2L15 6.5H10.5Z" fill="#e9e9e9"/><path d="M5 10.5H11M5 13H11M5 15.5H11" stroke="#e9e9e9" stroke-width="1.1"/></svg>
<svg class="a" style="left:142px;top:846px;" width="24" height="22" viewBox="0 0 24 22"><path d="M1 7.5H5L11 2V19L5 13.5H1Z" fill="#9a9a9a"/><path d="M13.5 8A3.5 3.5 0 0 1 13.5 13M15.5 5.5A7 7 0 0 1 15.5 15.5M18 3A10 10 0 0 1 18 18" fill="none" stroke="#9a9a9a" stroke-width="1.4"/></svg>
<div class="a" style="left:179px;top:855px;width:88px;height:3px;background:#7fb5d5;border-radius:1px"></div>
<div class="a" style="left:265px;top:850px;width:14px;height:13px;background:linear-gradient(#e0e0e0,#c6c6c6);border:1px solid #9a9a9a;border-radius:2px"></div>
<svg class="a" style="left:664px;top:840px;" width="110" height="30" viewBox="0 0 110 30"><g fill="none" stroke="#a4a4a4" stroke-width="1.3" stroke-linejoin="round">
<path d="M9.5 3.5H21L26.5 9V18.5L22.5 24.5H10L4.5 18.5V9Z"/>
<path d="M4.5 12H12V18H4.5M9 15H12M15 6.5V21.5H22M18 6.5V12H26.5M18 12V18H26.5M21 15H24"/>
<path d="M12 27.3H20.5" stroke-width="1.6"/>
</g>
<g fill="none" stroke="#a4a4a4" stroke-width="1.5" stroke-linecap="round">
<path d="M34.6 6V21.5H42.5"/>
<circle cx="48.4" cy="16.6" r="4.8"/><path d="M53.2 11.5V21.5"/>
<path d="M66 8.5C64.5 6 59 5.5 57.5 8.8C56 12.5 66.5 12.5 66.5 17.2C66.5 21.8 59 22.2 56.8 19"/>
<path d="M70 5.5V21.5M77.5 11.2L70.5 17.2L78 21.5"/>
<circle cx="85" cy="16.6" r="5"/>
<path d="M92.2 5.5V21.5"/>
<circle cx="99.6" cy="16.6" r="4.8"/><path d="M104.4 11.5V21.5"/>
</g></svg>
<svg class="a" style="left:1277px;top:845px;" width="22" height="22" viewBox="0 0 22 22"><circle cx="11" cy="11" r="9" fill="none" stroke="#b4b4b4" stroke-width="2.2"/><path d="M11 4.5V11L15 15" fill="none" stroke="#b4b4b4" stroke-width="2"/></svg>
<div class="t" style="left:1307px;top:845.8px;font-size:19.5px;font-weight:bold;color:#b4b4b4;font-family:Liberation Serif,serif;transform:scaleX(1.081);transform-origin:0 0">11:52</div>
<svg class="a" style="left:1373px;top:847px;" width="19" height="19" viewBox="0 0 19 19"><path d="M2.2 8V2.2H8M11 2.2H16.8V8M16.8 11V16.8H11M8 16.8H2.2V11" fill="none" stroke="#8e8e8e" stroke-width="2.4"/></svg>
<svg class="a" style="left:1230px;top:540px;" width="150" height="273" viewBox="0 0 150 273">
<defs>
<linearGradient id="suit" x1="0" y1="0" x2="1" y2="0"><stop offset="0" stop-color="#0c2844"/><stop offset=".5" stop-color="#112e4f"/><stop offset="1" stop-color="#0f2b4a"/></linearGradient>
</defs>
<!-- pants -->
<path d="M30 240H105L104 273H31Z" fill="#0e2239"/>
<path d="M66 246V273" stroke="#0a1a2c" stroke-width="1"/>
<path d="M67 246H104V273H67Z" fill="#0c1e33"/>
<!-- left hand -->
<path d="M9 229C6 236 5 246 7 254C9 262 13 267 16 268C17 262 16 255 18 250C20 254 22 257 24 256C25 248 24 238 23 230Z" fill="#efbd87"/>
<path d="M12 240C11 248 12 256 15 262" fill="none" stroke="#c6915d" stroke-width="1.2"/>
<!-- right hand -->
<path d="M108 234C106 244 107 256 110 263C113 268 116 270 118 269C120 264 124 258 126 252C128 246 127 240 126 235Z" fill="#efbd87"/>
<path d="M118 245C119 253 117 261 114 266M122 246C122 254 120 262 118 268" fill="none" stroke="#c6915d" stroke-width=".8"/>
<path d="M108 232H127L126 237H108Z" fill="#e9e9e9"/>
<path d="M108 230L116 233L115 236L108 234Z" fill="#8b5a2b"/>
<!-- left cuff -->
<path d="M8 225L25 228L24 233L8 230Z" fill="#eeeeee"/>
<path d="M9 229L23 232L22 235L9 233Z" fill="#c89a6a"/>
<!-- jacket -->
<path d="M50 70C38 78 28 85 22 92C17 98 16 104 15 121L11 180L8 226L25 229L26 246C40 250 70 249 106 245L107 233L132 235L140 170L136 122C134 108 131 97 125 92C118 87 100 74 88 66Z" fill="url(#suit)"/>
<path d="M109 155L113 160L110 231L108 238Z" fill="#ffffff"/>
<path d="M109.5 157L110 231" stroke="#0a2035" stroke-width="1"/>
<path d="M18 99C22 120 22 170 25 229" fill="none" stroke="#0a2238" stroke-width="1" opacity=".8"/>
<path d="M26 246C40 238 50 232 53 215" fill="none" stroke="#0a2238" stroke-width="1" opacity=".7"/>
<path d="M106 245C96 240 88 232 86 215" fill="none" stroke="#0a2238" stroke-width="1" opacity=".5"/>
<path d="M53 133L54 244" stroke="#0a2035" stroke-width="1.1"/>
<!-- shirt V -->
<path d="M50 70L53 133L88 66Z" fill="#eeeeee"/>
<path d="M53 73L62 85L54 132Z" fill="#d9d9d9" opacity=".6"/>
<!-- tie -->
<path d="M58 80L68 78L69 86L61 89Z" fill="#d81e15"/>
<path d="M60 89L68 86L66.5 107L53.5 132L55 108Z" fill="#e3241a"/>
<path d="M63 89L61 108L55 128" stroke="#b8170f" stroke-width=".8" fill="none"/>
<!-- lapels -->
<path d="M50 71L44 92L52 134Z" fill="#0e2a47"/>
<path d="M88 66L94 88L53 134Z" fill="#0d2946"/>
<path d="M49 71L43 92L52 134M88.5 66L94.5 88L53 134" fill="none" stroke="#091d33" stroke-width="1"/>
<!-- buttons -->
<circle cx="57" cy="154.5" r="2" fill="#081624"/>
<circle cx="57.7" cy="175" r="2" fill="#081624"/>
<circle cx="58.2" cy="195" r="2" fill="#081624"/>
<!-- neck -->
<path d="M54 58L52 72L68 78L85 70L84 52Z" fill="#e3ad78"/>
<path d="M52 71L60 79L67 78L76 73L85 67L87 70L80 91L70 79L64 82L60 96L50 80Z" fill="#f0f0f0"/>
<!-- face -->
<path d="M46 30C45.5 42 47 52 51 58C55 64 60 67.5 66 67.5C72 66.5 77 64 80 60L84 50C88 48 90 42 89 37C88 34 86 34 85 36L84 25C78 14 60 12 50 20Z" fill="#f0c08a"/>
<path d="M80 60L84 50L85 36L82 24C80 36 78 50 70 65Z" fill="#dba26c"/>
<path d="M52 60C58 64.5 66 65.5 76 61C72 66 62 69 52 60Z" fill="#c98d58" opacity=".7"/>
<!-- eyes, brows, mouth -->
<path d="M49 35C51.5 33.2 55 33 58.5 34.2M66 34C69 32.6 74 32.6 77.5 34.2" fill="none" stroke="#5a3a22" stroke-width="1.7"/>
<path d="M50.5 38.4C52 37.2 55 37.2 57 38.4C55 39.5 52 39.5 50.5 38.4ZM67.5 38.2C69 37 72.5 37 74.5 38.2C72.5 39.4 69 39.4 67.5 38.2Z" fill="#fff"/>
<circle cx="54" cy="38.3" r="1.3" fill="#3a2a20"/><circle cx="71" cy="38.1" r="1.3" fill="#3a2a20"/>
<path d="M53 37.2C55 36.5 57 37 58 38M66.5 37.2C68.5 36.3 72 36.3 75 37.5" fill="none" stroke="#4a3020" stroke-width=".6"/>
<path d="M58 41L56 48C57.5 49.5 60 49.5 61.5 48" fill="none" stroke="#c0834f" stroke-width=".9"/>
<path d="M54 55C58 56.5 64 56.5 68 54.5C65 59.5 58 60 54 55Z" fill="#fafafa" stroke="#b07050" stroke-width=".7"/>
<!-- hair -->
<path d="M44.5 33.5C43 24 45 14 52 8.5C58 5 72 5 80 7.5C86 10 89.5 17 89 25L86.5 37L84 39C83 31 81 27 79 25C75 21 66 21 57 23C52 24 48 27 46.5 34Z" fill="#6e421f"/>
<path d="M50 15C56 10 66 9 76 11C70 12 62 13 56 16C53 17.5 51 19 50 20Z" fill="#8c5a30" opacity=".8"/>
<path d="M76 14C82 16 86 20 87 27C84 22 80 19 76 18Z" fill="#8c5a30" opacity=".6"/>
</svg>
</body></html>
